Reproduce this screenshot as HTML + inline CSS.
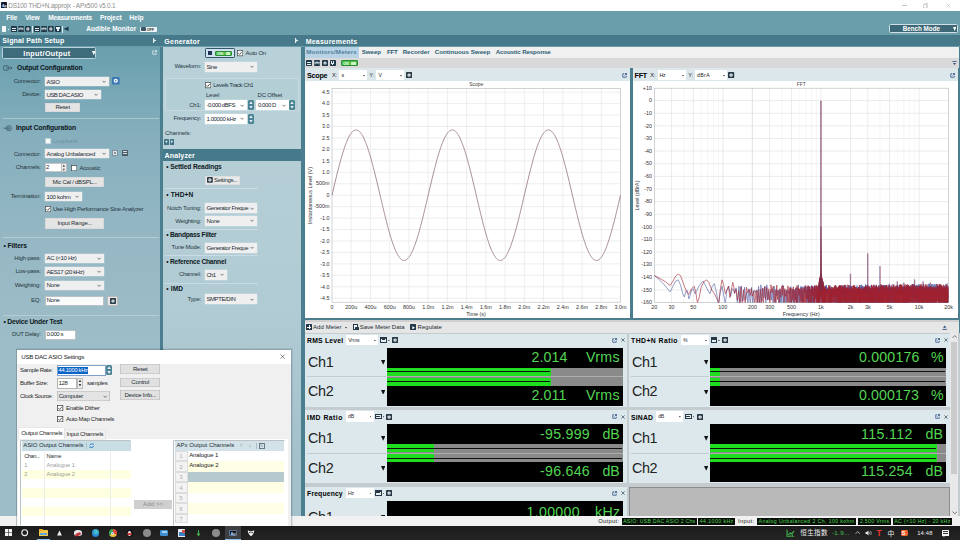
<!DOCTYPE html>
<html><head><meta charset="utf-8"><title>APx500</title><style>
html,body{margin:0;padding:0;}
body{width:960px;height:540px;overflow:hidden;position:relative;background:#6a9eab;font-family:"Liberation Sans", "Noto Sans CJK SC", sans-serif;}
#r{position:absolute;left:0;top:0;width:960px;height:540px;overflow:hidden;}
#r div,#r span,#r svg{position:absolute;}
#r span{display:block;}
</style></head><body><div id="r">
<div style="left:0.00px;top:0.00px;width:960.00px;height:11.30px;background:#ffffff;"></div>
<div style="left:1.20px;top:2.20px;width:5.60px;height:5.80px;background:#151a2a;border-radius:0.6px;"></div>
<span id="t0" style="top:4px;height:5px;line-height:5px;font-size:3.6px;color:#cfe6ff;white-space:nowrap;font-weight:bold;letter-spacing:-0.144px;left:2.00px;">Ap</span>
<span id="t1" style="top:1px;height:9px;line-height:9px;font-size:6.4px;color:#8c8c8c;white-space:nowrap;letter-spacing:-0.143px;left:8.20px;">DS100 THD+N.approjx - APx500 v5.0.1</span>
<div style="left:901.50px;top:5.20px;width:5.00px;height:0.60px;background:#c4c4c4;"></div>
<svg style="left:922.6px;top:2.6px" width="5.6" height="5.6" viewBox="0 0 10 10"><path d="M1,3 H7 V9 H1 Z M3,3 V1 H9 V7 H7" fill="none" stroke="#a8a8a8" stroke-width="0.9"/></svg>
<svg style="left:945.50px;top:3.00px" width="5" height="5" viewBox="0 0 10 10"><path d="M1,1 L9,9 M9,1 L1,9" fill="none" stroke="#b0b0b0" stroke-width="1.0"/></svg>
<div style="left:0.00px;top:11.30px;width:960.00px;height:23.60px;background:#6a9eab;"></div>
<span id="t2" style="top:13px;height:9px;line-height:9px;font-size:6.6px;color:#fff;white-space:nowrap;font-weight:bold;letter-spacing:-0.115px;left:6.30px;">File</span>
<span id="t3" style="top:13px;height:9px;line-height:9px;font-size:6.6px;color:#fff;white-space:nowrap;font-weight:bold;letter-spacing:-0.180px;left:25.20px;">View</span>
<span id="t4" style="top:13px;height:9px;line-height:9px;font-size:6.6px;color:#fff;white-space:nowrap;font-weight:bold;letter-spacing:-0.207px;left:48.30px;">Measurements</span>
<span id="t5" style="top:13px;height:9px;line-height:9px;font-size:6.6px;color:#fff;white-space:nowrap;font-weight:bold;letter-spacing:-0.123px;left:100.00px;">Project</span>
<span id="t6" style="top:13px;height:9px;line-height:9px;font-size:6.6px;color:#fff;white-space:nowrap;font-weight:bold;letter-spacing:-0.024px;left:129.30px;">Help</span>
<div style="left:2.00px;top:25.80px;width:4.20px;height:6.00px;background:#f4f7f8;border-radius:0.5px;"></div>
<div style="left:8.00px;top:28.80px;width:1.20px;height:0.80px;background:#eef;"></div>
<div style="left:11.20px;top:26.00px;width:5.80px;height:5.80px;background:#20394a;border-radius:0.8px;"></div>
<div style="left:12.10px;top:28.00px;width:4.00px;height:0.80px;background:#e6eef2;"></div>
<div style="left:12.10px;top:29.60px;width:4.00px;height:0.80px;background:#e6eef2;"></div>
<div style="left:18.00px;top:26.00px;width:5.80px;height:5.80px;background:#20394a;border-radius:0.8px;"></div>
<svg style="left:18.00px;top:26.00px" width="5.8" height="5.8" viewBox="0 0 10 10"><path d="M1.5,7.5 V3 L3.5,6 L5,2.5 L6.5,6 L8.5,3 V7.5" fill="none" stroke="#e6eef2" stroke-width="1.3"/></svg>
<svg style="left:24.80px;top:26.00px" width="5.8" height="5.8" viewBox="0 0 10 10"><rect x="0" y="0" width="10" height="10" rx="1.2" fill="#20394a"/><circle cx="5" cy="5" r="2.7" fill="#f2f6f8"/><circle cx="5" cy="5" r="1" fill="#20394a"/></svg>
<div style="left:32.00px;top:25.50px;width:0.60px;height:7.00px;background:#dce8ec;"></div>
<div style="left:33.80px;top:26.00px;width:5.80px;height:5.80px;background:#20394a;border-radius:0.8px;"></div>
<div style="left:34.70px;top:28.00px;width:4.00px;height:0.80px;background:#e6eef2;"></div>
<div style="left:34.70px;top:29.60px;width:4.00px;height:0.80px;background:#e6eef2;"></div>
<div style="left:40.80px;top:26.00px;width:5.80px;height:5.80px;background:#20394a;border-radius:0.8px;"></div>
<svg style="left:40.80px;top:26.00px" width="5.8" height="5.8" viewBox="0 0 10 10"><path d="M1.5,7.5 V3 L3.5,6 L5,2.5 L6.5,6 L8.5,3 V7.5" fill="none" stroke="#e6eef2" stroke-width="1.3"/></svg>
<svg style="left:48.00px;top:26.00px" width="5.8" height="5.8" viewBox="0 0 10 10"><rect x="0" y="0" width="10" height="10" rx="1.2" fill="#20394a"/><circle cx="5" cy="5" r="2.7" fill="#f2f6f8"/><circle cx="5" cy="5" r="1" fill="#20394a"/></svg>
<div style="left:55.00px;top:26.00px;width:5.80px;height:5.80px;background:#20394a;border-radius:0.8px;"></div>
<div style="left:56.00px;top:27.00px;width:1.60px;height:1.60px;background:#e6eef2;"></div>
<div style="left:58.20px;top:27.00px;width:1.60px;height:1.60px;background:#e6eef2;"></div>
<div style="left:57.10px;top:29.20px;width:1.60px;height:1.60px;background:#e6eef2;"></div>
<div style="left:56.50px;top:28.60px;width:2.80px;height:0.60px;background:#e6eef2;"></div>
<div style="left:62.30px;top:25.50px;width:0.60px;height:7.00px;background:#dce8ec;"></div>
<svg style="left:64.4px;top:26.3px" width="5.6" height="5.6" viewBox="0 0 10 10"><path d="M1,3.5 H4 L8,0.5 V9.5 L4,6.5 H1 Z" fill="#1d3644"/></svg>
<span id="t7" style="top:24px;height:9px;line-height:9px;font-size:6.4px;color:#fff;white-space:nowrap;font-weight:bold;letter-spacing:0.091px;left:86.30px;">Audible Monitor</span>
<div style="left:140.30px;top:26.60px;width:17.00px;height:5.20px;background:#f2f4f5;border-radius:1px;"></div>
<div style="left:141.00px;top:27.20px;width:4.60px;height:4.00px;background:#39566a;border-radius:0.7px;"></div>
<span id="t8" style="top:28px;height:5px;line-height:5px;font-size:3.8px;color:#333;white-space:nowrap;font-weight:bold;letter-spacing:-0.152px;left:146.80px;">OFF</span>
<div style="left:888.80px;top:23.80px;width:68.80px;height:9.70px;background:#3d6877;border:0.7px solid #cfe0e6;box-sizing:border-box;border-radius:1.5px;"></div>
<span id="t9" style="top:24px;height:9px;line-height:9px;font-size:6.3px;color:#fff;white-space:nowrap;font-weight:bold;letter-spacing:-0.014px;left:902.70px;">Bench Mode</span>
<svg style="left:952.90px;top:26.70px" width="3.4" height="4" viewBox="0 0 10 10" preserveAspectRatio="none"><path d="M0,0 H10 L5,10 Z" fill="#fff"/></svg>
<div style="left:0.00px;top:34.90px;width:960.00px;height:11.60px;background:#467a8a;"></div>
<span id="t10" style="top:36px;height:10px;line-height:10px;font-size:7px;color:#fff;white-space:nowrap;font-weight:bold;letter-spacing:0.164px;left:2.20px;">Signal Path Setup</span>
<span id="t11" style="top:37px;height:10px;line-height:10px;font-size:7px;color:#fff;white-space:nowrap;font-weight:bold;letter-spacing:0.248px;left:164.30px;">Generator</span>
<span id="t12" style="top:37px;height:10px;line-height:10px;font-size:7px;color:#fff;white-space:nowrap;font-weight:bold;letter-spacing:0.231px;left:305.70px;">Measurements</span>
<div style="left:152.50px;top:38.00px;width:0.80px;height:5.00px;background:#e6eff2;"></div>
<svg style="left:154.0px;top:39px" width="2.5" height="3" viewBox="0 0 10 10"><path d="M0,0 L10,5 L0,10 Z" fill="#e6eff2"/></svg>
<div style="left:294.50px;top:38.00px;width:0.80px;height:5.00px;background:#e6eff2;"></div>
<svg style="left:296.0px;top:39px" width="2.5" height="3" viewBox="0 0 10 10"><path d="M0,0 L10,5 L0,10 Z" fill="#e6eff2"/></svg>
<div style="left:0.00px;top:46.50px;width:160.20px;height:480.00px;background:linear-gradient(#699fae 0px,#86afbd 90px,#96b8c4 200px,#9dbdc8 300px,#9dbdc8 480px);"></div>
<div style="left:160.20px;top:46.50px;width:2.60px;height:480.00px;background:#4b7f8f;"></div>
<div style="left:1.80px;top:47.20px;width:94.60px;height:12.00px;background:#3f6c7b;border:0.8px solid #b9d3db;box-sizing:border-box;border-radius:1.5px;"></div>
<span id="t13" style="top:49px;height:10px;line-height:10px;font-size:7.2px;color:#fff;white-space:nowrap;font-weight:bold;letter-spacing:0.341px;left:23.30px;">Input/Output</span>
<svg style="left:91.50px;top:51.10px" width="3.6" height="4.2" viewBox="0 0 10 10" preserveAspectRatio="none"><path d="M0,0 H10 L5,10 Z" fill="#fff"/></svg>
<svg style="left:152.30px;top:50.30px" width="5" height="5" viewBox="0 0 10 10"><path d="M4,1.5 H1.5 V8.5 H8.5 V6" fill="none" stroke="#e8f1f4" stroke-width="1.5"/><path d="M5,5 L9,1 M5.5,1 H9 V4.5" fill="none" stroke="#e8f1f4" stroke-width="1.5"/></svg>
<svg style="left:3px;top:64.8px" width="10" height="6" viewBox="0 0 20 12"><rect x="1" y="1.5" width="10" height="9" rx="3" fill="none" stroke="#3b5663" stroke-width="1.6"/><path d="M6,6 H18 M15,3 L18,6 L15,9" fill="none" stroke="#3b5663" stroke-width="1.6"/></svg>
<span id="t14" style="top:63px;height:9px;line-height:9px;font-size:6.8px;color:#0d171c;white-space:nowrap;font-weight:bold;letter-spacing:-0.161px;left:17.00px;">Output Configuration</span>
<span id="t15" style="top:77px;height:8px;line-height:8px;font-size:6px;color:#27373f;white-space:nowrap;letter-spacing:-0.240px;right:919.40px;">Connector:</span>
<div style="left:45.00px;top:76.90px;width:64.00px;height:9.20px;background:#efefef;box-shadow:0 0 0 0.4px rgba(235,240,242,0.55);"></div>
<span id="t16" style="top:78px;height:8px;line-height:8px;font-size:6px;color:#1c2b33;white-space:nowrap;letter-spacing:-0.336px;left:46.50px;">ASIO</span>
<svg style="left:101.90px;top:80.10px" width="4.20" height="3.20" viewBox="-2.1 -1.6 4.2 3.2"><path d="M-1.6,-0.8 L0,0.8 L1.6,-0.8" fill="none" stroke="#444" stroke-width="0.7"/></svg>
<svg style="left:112.00px;top:77.00px" width="7.6" height="7.6" viewBox="0 0 10 10"><rect x="0" y="0" width="10" height="10" rx="1.2" fill="#3d78b4"/><circle cx="5" cy="5" r="2.7" fill="#fff"/><circle cx="5" cy="5" r="1" fill="#3d78b4"/></svg>
<span id="t17" style="top:90px;height:8px;line-height:8px;font-size:6px;color:#27373f;white-space:nowrap;letter-spacing:-0.240px;right:919.40px;">Device:</span>
<div style="left:45.00px;top:89.90px;width:56.40px;height:9.40px;background:#efefef;box-shadow:0 0 0 0.4px rgba(235,240,242,0.55);"></div>
<span id="t18" style="top:91px;height:8px;line-height:8px;font-size:6px;color:#1c2b33;white-space:nowrap;letter-spacing:-0.488px;left:46.50px;">USB DAC ASIO</span>
<svg style="left:94.30px;top:93.20px" width="4.20" height="3.20" viewBox="-2.1 -1.6 4.2 3.2"><path d="M-1.6,-0.8 L0,0.8 L1.6,-0.8" fill="none" stroke="#444" stroke-width="0.7"/></svg>
<div style="left:45.00px;top:102.80px;width:35.30px;height:9.60px;background:#e4e4e4;box-shadow:inset 0 0 0 0.6px #d2d2d2;"></div>
<span id="t19" style="top:103px;height:8px;line-height:8px;font-size:6px;color:#1c2b33;white-space:nowrap;letter-spacing:-0.240px;left:-87.35px;width:300px;text-align:center;">Reset</span>
<div style="left:2.50px;top:118.20px;width:156.00px;height:0.70px;background:#a9c6d0;"></div>
<svg style="left:2.6px;top:124.6px" width="10" height="6.4" viewBox="0 0 20 12.8"><circle cx="12" cy="6.4" r="5" fill="none" stroke="#3b5663" stroke-width="1.6"/><path d="M1,6.4 H13 M10,3.4 L13,6.4 L10,9.4" fill="none" stroke="#3b5663" stroke-width="1.6"/></svg>
<span id="t20" style="top:123px;height:9px;line-height:9px;font-size:6.8px;color:#0d171c;white-space:nowrap;font-weight:bold;letter-spacing:-0.160px;left:16.00px;">Input Configuration</span>
<svg style="left:44.70px;top:138.40px" width="6.2" height="6.2" viewBox="0 0 6.2 6.2"><rect x="0.35" y="0.35" width="5.50" height="5.50" fill="#f4f8f9" stroke="#b5c9d1" stroke-width="0.7"/></svg>
<span id="t21" style="top:137px;height:8px;line-height:8px;font-size:6px;color:#6f93a1;white-space:nowrap;letter-spacing:-0.129px;left:53.00px;">Loopback</span>
<span id="t22" style="top:150px;height:8px;line-height:8px;font-size:6px;color:#27373f;white-space:nowrap;letter-spacing:-0.240px;right:919.40px;">Connector:</span>
<div style="left:45.00px;top:149.00px;width:64.00px;height:9.40px;background:#efefef;box-shadow:0 0 0 0.4px rgba(235,240,242,0.55);"></div>
<span id="t23" style="top:150px;height:8px;line-height:8px;font-size:6px;color:#1c2b33;white-space:nowrap;letter-spacing:-0.228px;left:46.50px;">Analog Unbalanced</span>
<svg style="left:101.90px;top:152.30px" width="4.20" height="3.20" viewBox="-2.1 -1.6 4.2 3.2"><path d="M-1.6,-0.8 L0,0.8 L1.6,-0.8" fill="none" stroke="#444" stroke-width="0.7"/></svg>
<div style="left:112.00px;top:150.20px;width:5.60px;height:5.60px;background:#dfe7ea;border:0.5px solid #7b8f99;box-sizing:border-box;border-radius:0.8px;"></div>
<div style="left:113.90px;top:152.10px;width:1.80px;height:1.80px;border:0.5px solid #556;box-sizing:border-box;border-radius:50%;"></div>
<div style="left:122.00px;top:150.20px;width:6.00px;height:5.60px;background:#4a5d68;border-radius:0.6px;"></div>
<div style="left:123.00px;top:151.30px;width:4.00px;height:1.20px;background:#d5dfe4;"></div>
<div style="left:123.00px;top:153.30px;width:4.00px;height:1.20px;background:#d5dfe4;"></div>
<span id="t24" style="top:163px;height:8px;line-height:8px;font-size:6px;color:#27373f;white-space:nowrap;letter-spacing:-0.240px;right:919.40px;">Channels:</span>
<div style="left:45.00px;top:162.90px;width:16.50px;height:9.30px;background:#fff;border:0.5px solid #c4c8ca;box-sizing:border-box;"></div>
<span id="t25" style="top:163px;height:8px;line-height:8px;font-size:6px;color:#1c2b33;white-space:nowrap;letter-spacing:-0.240px;left:46.00px;">2</span>
<div style="left:61.30px;top:162.90px;width:5.60px;height:9.30px;background:#f0f0f0;border:0.5px solid #bbb;box-sizing:border-box;"></div>
<svg style="left:61.30px;top:162.90px" width="5.6" height="9.3" viewBox="0 0 5.6 9.3"><path d="M2.8,1.6 L3.9999999999999996,3.6500000000000004 L1.6,3.6500000000000004 Z M2.8,7.700000000000001 L3.9999999999999996,5.65 L1.6,5.65 Z" fill="#444"/></svg>
<svg style="left:71.00px;top:164.60px" width="6.2" height="6.2" viewBox="0 0 6.2 6.2"><rect x="0.35" y="0.35" width="5.50" height="5.50" fill="#fff" stroke="#444" stroke-width="0.7"/></svg>
<span id="t26" style="top:164px;height:8px;line-height:8px;font-size:6px;color:#27373f;white-space:nowrap;letter-spacing:-0.248px;left:79.60px;">Acoustic</span>
<div style="left:45.00px;top:177.00px;width:59.20px;height:10.00px;background:#e4e4e4;box-shadow:inset 0 0 0 0.6px #d2d2d2;"></div>
<span id="t27" style="top:178px;height:8px;line-height:8px;font-size:6px;color:#1c2b33;white-space:nowrap;letter-spacing:-0.240px;left:-75.40px;width:300px;text-align:center;">Mic Cal / dBSPL...</span>
<span id="t28" style="top:192px;height:8px;line-height:8px;font-size:6px;color:#27373f;white-space:nowrap;letter-spacing:-0.240px;right:919.40px;">Termination:</span>
<div style="left:45.00px;top:191.80px;width:36.60px;height:9.60px;background:#efefef;box-shadow:0 0 0 0.4px rgba(235,240,242,0.55);"></div>
<span id="t29" style="top:193px;height:8px;line-height:8px;font-size:6px;color:#1c2b33;white-space:nowrap;letter-spacing:-0.295px;left:46.50px;">100 kohm</span>
<svg style="left:74.50px;top:195.20px" width="4.20" height="3.20" viewBox="-2.1 -1.6 4.2 3.2"><path d="M-1.6,-0.8 L0,0.8 L1.6,-0.8" fill="none" stroke="#444" stroke-width="0.7"/></svg>
<svg style="left:44.70px;top:206.20px" width="6.2" height="6.2" viewBox="0 0 6.2 6.2"><rect x="0.35" y="0.35" width="5.50" height="5.50" fill="#fff" stroke="#444" stroke-width="0.7"/><path d="M1.43,3.22 L2.67,4.46 L4.90,1.80" fill="none" stroke="#222" stroke-width="0.75"/></svg>
<span id="t30" style="top:205px;height:8px;line-height:8px;font-size:6px;color:#27373f;white-space:nowrap;letter-spacing:-0.257px;left:53.00px;">Use High Performance Sine Analyzer</span>
<div style="left:45.00px;top:217.60px;width:59.20px;height:11.60px;background:#e4e4e4;box-shadow:inset 0 0 0 0.6px #d2d2d2;"></div>
<span id="t31" style="top:219px;height:8px;line-height:8px;font-size:6px;color:#1c2b33;white-space:nowrap;letter-spacing:-0.240px;left:-75.40px;width:300px;text-align:center;">Input Range...</span>
<div style="left:2.50px;top:237.20px;width:156.00px;height:0.70px;background:#b3ccd5;"></div>
<span id="t32" style="top:241px;height:9px;line-height:9px;font-size:6.8px;color:#0d171c;white-space:nowrap;font-weight:bold;letter-spacing:-0.141px;left:3.60px;">• Filters</span>
<span id="t33" style="top:254px;height:8px;line-height:8px;font-size:6px;color:#27373f;white-space:nowrap;letter-spacing:-0.240px;right:919.40px;">High-pass:</span>
<div style="left:45.00px;top:253.60px;width:59.00px;height:9.40px;background:#efefef;box-shadow:0 0 0 0.4px rgba(235,240,242,0.55);"></div>
<span id="t34" style="top:254px;height:8px;line-height:8px;font-size:6px;color:#1c2b33;white-space:nowrap;letter-spacing:-0.290px;left:46.50px;">AC (&lt;10 Hz)</span>
<svg style="left:96.90px;top:256.90px" width="4.20" height="3.20" viewBox="-2.1 -1.6 4.2 3.2"><path d="M-1.6,-0.8 L0,0.8 L1.6,-0.8" fill="none" stroke="#444" stroke-width="0.7"/></svg>
<span id="t35" style="top:267px;height:8px;line-height:8px;font-size:6px;color:#27373f;white-space:nowrap;letter-spacing:-0.240px;right:919.40px;">Low-pass:</span>
<div style="left:45.00px;top:267.00px;width:59.00px;height:9.40px;background:#efefef;box-shadow:0 0 0 0.4px rgba(235,240,242,0.55);"></div>
<span id="t36" style="top:268px;height:8px;line-height:8px;font-size:6px;color:#1c2b33;white-space:nowrap;letter-spacing:-0.395px;left:46.50px;">AES17 (20 kHz)</span>
<svg style="left:96.90px;top:270.30px" width="4.20" height="3.20" viewBox="-2.1 -1.6 4.2 3.2"><path d="M-1.6,-0.8 L0,0.8 L1.6,-0.8" fill="none" stroke="#444" stroke-width="0.7"/></svg>
<span id="t37" style="top:281px;height:8px;line-height:8px;font-size:6px;color:#27373f;white-space:nowrap;letter-spacing:-0.240px;right:919.40px;">Weighting:</span>
<div style="left:45.00px;top:280.60px;width:59.00px;height:9.40px;background:#efefef;box-shadow:0 0 0 0.4px rgba(235,240,242,0.55);"></div>
<span id="t38" style="top:281px;height:8px;line-height:8px;font-size:6px;color:#1c2b33;white-space:nowrap;letter-spacing:-0.336px;left:46.50px;">None</span>
<svg style="left:96.90px;top:283.90px" width="4.20" height="3.20" viewBox="-2.1 -1.6 4.2 3.2"><path d="M-1.6,-0.8 L0,0.8 L1.6,-0.8" fill="none" stroke="#444" stroke-width="0.7"/></svg>
<span id="t39" style="top:296px;height:8px;line-height:8px;font-size:6px;color:#27373f;white-space:nowrap;letter-spacing:-0.240px;right:919.40px;">EQ:</span>
<div style="left:45.00px;top:296.00px;width:59.00px;height:9.60px;background:#fafafa;border:0.5px solid #b9c2c6;box-sizing:border-box;"></div>
<span id="t40" style="top:296px;height:8px;line-height:8px;font-size:6px;color:#1c2b33;white-space:nowrap;letter-spacing:-0.336px;left:46.50px;">None</span>
<div style="left:107.00px;top:296.00px;width:11.40px;height:10.00px;background:#e6e6e6;border:0.5px solid #bbb;box-sizing:border-box;"></div>
<svg style="left:109.80px;top:298.00px" width="6" height="6" viewBox="0 0 10 10"><rect x="0" y="0" width="10" height="10" rx="1.2" fill="#2a3d49"/><circle cx="5" cy="5" r="2.7" fill="#fff"/><circle cx="5" cy="5" r="1" fill="#2a3d49"/></svg>
<div style="left:2.50px;top:314.70px;width:156.00px;height:0.70px;background:#b3ccd5;"></div>
<span id="t41" style="top:317px;height:9px;line-height:9px;font-size:6.8px;color:#0d171c;white-space:nowrap;font-weight:bold;letter-spacing:-0.246px;left:3.60px;">• Device Under Test</span>
<span id="t42" style="top:330px;height:8px;line-height:8px;font-size:6px;color:#27373f;white-space:nowrap;letter-spacing:-0.240px;right:919.40px;">DUT Delay:</span>
<div style="left:45.00px;top:330.00px;width:31.20px;height:9.60px;background:#fff;border:0.5px solid #b9c2c6;box-sizing:border-box;"></div>
<span id="t43" style="top:330px;height:8px;line-height:8px;font-size:6px;color:#1c2b33;white-space:nowrap;letter-spacing:-0.455px;left:46.50px;">0.000 s</span>
<div style="left:162.80px;top:46.50px;width:138.00px;height:102.00px;background:#b8d1d9;"></div>
<div style="left:300.60px;top:46.50px;width:4.00px;height:480.00px;background:#4b7f8f;"></div>
<div style="left:205.30px;top:48.20px;width:29.60px;height:10.20px;background:#cfe3ef;border:0.7px solid #35566a;box-sizing:border-box;border-radius:1.2px;"></div>
<div style="left:207.60px;top:51.00px;width:4.20px;height:4.40px;background:#1f3454;"></div>
<div style="left:214.80px;top:50.60px;width:17.60px;height:5.40px;background:#4fc24a;border:0.5px solid #2e8a34;box-sizing:border-box;border-radius:1px;"></div>
<span id="t44" style="top:51px;height:6px;line-height:6px;font-size:4px;color:#eaffea;white-space:nowrap;font-weight:bold;letter-spacing:-0.160px;left:217.30px;">ON</span>
<div style="left:225.80px;top:51.80px;width:4.60px;height:3.00px;background:#c9f5c4;border-radius:0.6px;"></div>
<svg style="left:236.80px;top:50.40px" width="6.2" height="6.2" viewBox="0 0 6.2 6.2"><rect x="0.35" y="0.35" width="5.50" height="5.50" fill="#fff" stroke="#444" stroke-width="0.7"/><path d="M1.43,3.22 L2.67,4.46 L4.90,1.80" fill="none" stroke="#222" stroke-width="0.75"/></svg>
<span id="t45" style="top:49px;height:8px;line-height:8px;font-size:6px;color:#27373f;white-space:nowrap;letter-spacing:-0.217px;left:245.50px;">Auto On</span>
<span id="t46" style="top:62px;height:8px;line-height:8px;font-size:6px;color:#27373f;white-space:nowrap;letter-spacing:-0.240px;right:759.00px;">Waveform:</span>
<div style="left:204.90px;top:62.00px;width:52.40px;height:9.70px;background:#efefef;box-shadow:0 0 0 0.4px rgba(235,240,242,0.55);"></div>
<span id="t47" style="top:63px;height:8px;line-height:8px;font-size:6px;color:#1c2b33;white-space:nowrap;letter-spacing:-0.354px;left:206.40px;">Sine</span>
<svg style="left:250.20px;top:65.45px" width="4.20" height="3.20" viewBox="-2.1 -1.6 4.2 3.2"><path d="M-1.6,-0.8 L0,0.8 L1.6,-0.8" fill="none" stroke="#444" stroke-width="0.7"/></svg>
<div style="left:164.60px;top:78.30px;width:134.00px;height:33.20px;background:#b4ced6;border:0.6px solid #c6dae0;box-sizing:border-box;"></div>
<svg style="left:204.90px;top:82.40px" width="6.2" height="6.2" viewBox="0 0 6.2 6.2"><rect x="0.35" y="0.35" width="5.50" height="5.50" fill="#fff" stroke="#444" stroke-width="0.7"/><path d="M1.43,3.22 L2.67,4.46 L4.90,1.80" fill="none" stroke="#222" stroke-width="0.75"/></svg>
<span id="t48" style="top:81px;height:8px;line-height:8px;font-size:6px;color:#27373f;white-space:nowrap;letter-spacing:-0.391px;left:213.20px;">Levels Track Ch1</span>
<span id="t49" style="top:91px;height:8px;line-height:8px;font-size:6px;color:#27373f;white-space:nowrap;letter-spacing:-0.269px;left:206.00px;">Level</span>
<span id="t50" style="top:91px;height:8px;line-height:8px;font-size:6px;color:#27373f;white-space:nowrap;letter-spacing:-0.204px;left:257.60px;">DC Offset</span>
<span id="t51" style="top:101px;height:8px;line-height:8px;font-size:6px;color:#27373f;white-space:nowrap;letter-spacing:-0.240px;right:759.00px;">Ch1:</span>
<div style="left:204.90px;top:100.10px;width:42.20px;height:10.00px;background:#fff;box-shadow:0 0 0 0.4px rgba(235,240,242,0.55);"></div>
<span id="t52" style="top:101px;height:8px;line-height:8px;font-size:6px;color:#1c2b33;white-space:nowrap;letter-spacing:-0.463px;left:206.40px;">-0.000 dBFS</span>
<svg style="left:240.00px;top:103.70px" width="4.20" height="3.20" viewBox="-2.1 -1.6 4.2 3.2"><path d="M-1.6,-0.8 L0,0.8 L1.6,-0.8" fill="none" stroke="#444" stroke-width="0.7"/></svg>
<div style="left:247.60px;top:100.30px;width:6.00px;height:9.80px;background:#4a8393;border-radius:1.5px;"></div>
<svg style="left:247.60px;top:100.30px" width="6" height="9.8" viewBox="0 0 6 9.8"><path d="M3.0,1.2 L4.7,3.9000000000000004 L1.3,3.9000000000000004 Z M3.0,8.600000000000001 L4.7,5.9 L1.3,5.9 Z" fill="#e8f2f5"/></svg>
<div style="left:256.40px;top:100.10px;width:32.20px;height:10.00px;background:#fff;box-shadow:0 0 0 0.4px rgba(235,240,242,0.55);"></div>
<span id="t53" style="top:101px;height:8px;line-height:8px;font-size:6px;color:#1c2b33;white-space:nowrap;letter-spacing:-0.417px;left:257.90px;">0.000 D</span>
<svg style="left:281.50px;top:103.70px" width="4.20" height="3.20" viewBox="-2.1 -1.6 4.2 3.2"><path d="M-1.6,-0.8 L0,0.8 L1.6,-0.8" fill="none" stroke="#444" stroke-width="0.7"/></svg>
<div style="left:289.20px;top:100.30px;width:6.00px;height:9.80px;background:#4a8393;border-radius:1.5px;"></div>
<svg style="left:289.20px;top:100.30px" width="6" height="9.8" viewBox="0 0 6 9.8"><path d="M3.0,1.2 L4.7,3.9000000000000004 L1.3,3.9000000000000004 Z M3.0,8.600000000000001 L4.7,5.9 L1.3,5.9 Z" fill="#e8f2f5"/></svg>
<span id="t54" style="top:114px;height:8px;line-height:8px;font-size:6px;color:#27373f;white-space:nowrap;letter-spacing:-0.240px;right:759.00px;">Frequency:</span>
<div style="left:204.90px;top:113.80px;width:42.20px;height:10.00px;background:#fff;box-shadow:0 0 0 0.4px rgba(235,240,242,0.55);"></div>
<span id="t55" style="top:115px;height:8px;line-height:8px;font-size:6px;color:#1c2b33;white-space:nowrap;letter-spacing:-0.373px;left:206.40px;">1.00000 kHz</span>
<svg style="left:240.00px;top:117.40px" width="4.20" height="3.20" viewBox="-2.1 -1.6 4.2 3.2"><path d="M-1.6,-0.8 L0,0.8 L1.6,-0.8" fill="none" stroke="#444" stroke-width="0.7"/></svg>
<div style="left:247.60px;top:114.00px;width:6.00px;height:9.80px;background:#4a8393;border-radius:1.5px;"></div>
<svg style="left:247.60px;top:114.00px" width="6" height="9.8" viewBox="0 0 6 9.8"><path d="M3.0,1.2 L4.7,3.9000000000000004 L1.3,3.9000000000000004 Z M3.0,8.600000000000001 L4.7,5.9 L1.3,5.9 Z" fill="#e8f2f5"/></svg>
<span id="t56" style="top:129px;height:8px;line-height:8px;font-size:6px;color:#27373f;white-space:nowrap;letter-spacing:-0.115px;left:165.00px;">Channels:</span>
<div style="left:164.20px;top:139.20px;width:4.80px;height:5.60px;background:#3f7283;border-radius:0.6px;"></div>
<div style="left:169.60px;top:139.20px;width:4.80px;height:5.60px;background:#3f7283;border-radius:0.6px;"></div>
<svg style="left:164.2px;top:139.2px" width="10.2" height="5.6" viewBox="0 0 10.2 5.6"><path d="M1.2,1.8 H3.6 L2.4,4.2 Z M6.6,1.8 H9 L7.8,4.2 Z" fill="#e8f2f5"/></svg>
<div style="left:162.80px;top:148.50px;width:138.00px;height:13.00px;background:#467a8a;"></div>
<span id="t57" style="top:151px;height:10px;line-height:10px;font-size:7px;color:#fff;white-space:nowrap;font-weight:bold;letter-spacing:0.164px;left:164.50px;">Analyzer</span>
<div style="left:162.80px;top:161.30px;width:138.00px;height:365.00px;background:linear-gradient(#b5ced6 0px,#b1cbd4 150px,#a3c1cb 300px,#a3c1cb 365px);"></div>
<span id="t58" style="top:162px;height:9px;line-height:9px;font-size:6.6px;color:#0d171c;white-space:nowrap;font-weight:bold;letter-spacing:-0.130px;left:166.30px;">• Settled Readings</span>
<div style="left:205.30px;top:175.70px;width:34.90px;height:9.20px;background:#e9e9e9;box-shadow:inset 0 0 0 0.5px #d6d6d6;"></div>
<svg style="left:207.00px;top:177.30px" width="5.8" height="5.8" viewBox="0 0 10 10"><rect x="0" y="0" width="10" height="10" rx="1.2" fill="#263a47"/><circle cx="5" cy="5" r="2.7" fill="#fff"/><circle cx="5" cy="5" r="1" fill="#263a47"/></svg>
<span id="t59" style="top:176px;height:8px;line-height:8px;font-size:6px;color:#1c2b33;white-space:nowrap;letter-spacing:-0.308px;left:214.00px;">Settings...</span>
<div style="left:164.80px;top:188.40px;width:93.00px;height:0.60px;background:#c9dce2;"></div>
<span id="t60" style="top:190px;height:9px;line-height:9px;font-size:6.6px;color:#0d171c;white-space:nowrap;font-weight:bold;letter-spacing:0.127px;left:166.30px;">• THD+N</span>
<span id="t61" style="top:204px;height:8px;line-height:8px;font-size:6px;color:#27373f;white-space:nowrap;letter-spacing:-0.240px;right:759.00px;">Notch Tuning:</span>
<div style="left:204.90px;top:203.20px;width:52.40px;height:9.70px;background:#efefef;box-shadow:0 0 0 0.4px rgba(235,240,242,0.55);"></div>
<span id="t62" style="top:204px;height:8px;line-height:8px;font-size:6px;color:#1c2b33;white-space:nowrap;letter-spacing:-0.363px;left:206.40px;">Generator Freque</span>
<svg style="left:250.20px;top:206.65px" width="4.20" height="3.20" viewBox="-2.1 -1.6 4.2 3.2"><path d="M-1.6,-0.8 L0,0.8 L1.6,-0.8" fill="none" stroke="#444" stroke-width="0.7"/></svg>
<span id="t63" style="top:217px;height:8px;line-height:8px;font-size:6px;color:#27373f;white-space:nowrap;letter-spacing:-0.240px;right:759.00px;">Weighting:</span>
<div style="left:204.90px;top:216.00px;width:52.40px;height:9.70px;background:#efefef;box-shadow:0 0 0 0.4px rgba(235,240,242,0.55);"></div>
<span id="t64" style="top:217px;height:8px;line-height:8px;font-size:6px;color:#1c2b33;white-space:nowrap;letter-spacing:-0.311px;left:206.40px;">None</span>
<svg style="left:250.20px;top:219.45px" width="4.20" height="3.20" viewBox="-2.1 -1.6 4.2 3.2"><path d="M-1.6,-0.8 L0,0.8 L1.6,-0.8" fill="none" stroke="#444" stroke-width="0.7"/></svg>
<div style="left:164.80px;top:228.50px;width:93.00px;height:0.60px;background:#c9dce2;"></div>
<span id="t65" style="top:230px;height:9px;line-height:9px;font-size:6.6px;color:#0d171c;white-space:nowrap;font-weight:bold;letter-spacing:-0.201px;left:166.30px;">• Bandpass Filter</span>
<span id="t66" style="top:243px;height:8px;line-height:8px;font-size:6px;color:#27373f;white-space:nowrap;letter-spacing:-0.240px;right:759.00px;">Tune Mode:</span>
<div style="left:204.90px;top:243.00px;width:52.40px;height:9.70px;background:#efefef;box-shadow:0 0 0 0.4px rgba(235,240,242,0.55);"></div>
<span id="t67" style="top:244px;height:8px;line-height:8px;font-size:6px;color:#1c2b33;white-space:nowrap;letter-spacing:-0.363px;left:206.40px;">Generator Freque</span>
<svg style="left:250.20px;top:246.45px" width="4.20" height="3.20" viewBox="-2.1 -1.6 4.2 3.2"><path d="M-1.6,-0.8 L0,0.8 L1.6,-0.8" fill="none" stroke="#444" stroke-width="0.7"/></svg>
<div style="left:164.80px;top:255.30px;width:93.00px;height:0.60px;background:#c9dce2;"></div>
<span id="t68" style="top:257px;height:9px;line-height:9px;font-size:6.6px;color:#0d171c;white-space:nowrap;font-weight:bold;letter-spacing:-0.220px;left:166.30px;">• Reference Channel</span>
<span id="t69" style="top:270px;height:8px;line-height:8px;font-size:6px;color:#27373f;white-space:nowrap;letter-spacing:-0.240px;right:759.00px;">Channel:</span>
<div style="left:204.90px;top:270.00px;width:22.00px;height:9.70px;background:#efefef;box-shadow:0 0 0 0.4px rgba(235,240,242,0.55);"></div>
<span id="t70" style="top:271px;height:8px;line-height:8px;font-size:6px;color:#1c2b33;white-space:nowrap;letter-spacing:-0.639px;left:206.40px;">Ch1</span>
<svg style="left:219.80px;top:273.45px" width="4.20" height="3.20" viewBox="-2.1 -1.6 4.2 3.2"><path d="M-1.6,-0.8 L0,0.8 L1.6,-0.8" fill="none" stroke="#444" stroke-width="0.7"/></svg>
<div style="left:164.80px;top:282.60px;width:93.00px;height:0.60px;background:#c9dce2;"></div>
<span id="t71" style="top:284px;height:9px;line-height:9px;font-size:6.6px;color:#0d171c;white-space:nowrap;font-weight:bold;letter-spacing:0.153px;left:166.30px;">• IMD</span>
<span id="t72" style="top:295px;height:8px;line-height:8px;font-size:6px;color:#27373f;white-space:nowrap;letter-spacing:-0.240px;right:759.00px;">Type:</span>
<div style="left:204.90px;top:294.20px;width:52.40px;height:9.70px;background:#efefef;box-shadow:0 0 0 0.4px rgba(235,240,242,0.55);"></div>
<span id="t73" style="top:295px;height:8px;line-height:8px;font-size:6px;color:#1c2b33;white-space:nowrap;letter-spacing:-0.397px;left:206.40px;">SMPTE/DIN</span>
<svg style="left:250.20px;top:297.65px" width="4.20" height="3.20" viewBox="-2.1 -1.6 4.2 3.2"><path d="M-1.6,-0.8 L0,0.8 L1.6,-0.8" fill="none" stroke="#444" stroke-width="0.7"/></svg>
<div style="left:304.50px;top:46.50px;width:655.50px;height:11.60px;background:#f0f0f0;"></div>
<div style="left:304.50px;top:47.00px;width:54.00px;height:10.80px;background:#b9d3e6;"></div>
<span id="t74" style="top:47px;height:9px;line-height:9px;font-size:6.2px;color:#4f7f97;white-space:nowrap;font-weight:bold;letter-spacing:0.200px;left:306.20px;">Monitors/Meters</span>
<span id="t75" style="top:47px;height:9px;line-height:9px;font-size:6.2px;color:#2c5f73;white-space:nowrap;font-weight:bold;letter-spacing:-0.082px;left:361.80px;">Sweep</span>
<span id="t76" style="top:47px;height:9px;line-height:9px;font-size:6.2px;color:#2c5f73;white-space:nowrap;font-weight:bold;letter-spacing:-0.281px;left:387.00px;">FFT</span>
<span id="t77" style="top:47px;height:9px;line-height:9px;font-size:6.2px;color:#2c5f73;white-space:nowrap;font-weight:bold;letter-spacing:-0.034px;left:402.70px;">Recorder</span>
<span id="t78" style="top:47px;height:9px;line-height:9px;font-size:6.2px;color:#2c5f73;white-space:nowrap;font-weight:bold;letter-spacing:-0.012px;left:434.80px;">Continuous Sweep</span>
<span id="t79" style="top:47px;height:9px;line-height:9px;font-size:6.2px;color:#2c5f73;white-space:nowrap;font-weight:bold;letter-spacing:-0.148px;left:495.70px;">Acoustic Response</span>
<div style="left:304.50px;top:58.10px;width:655.50px;height:10.00px;background:#d9d9d9;"></div>
<div style="left:306.00px;top:60.00px;width:6.00px;height:6.00px;background:#20394a;border-radius:0.8px;"></div>
<div style="left:306.90px;top:62.00px;width:4.20px;height:0.80px;background:#e6eef2;"></div>
<div style="left:306.90px;top:63.60px;width:4.20px;height:0.80px;background:#e6eef2;"></div>
<div style="left:313.50px;top:60.00px;width:6.00px;height:6.00px;background:#20394a;border-radius:0.8px;"></div>
<svg style="left:313.50px;top:60.00px" width="6" height="6" viewBox="0 0 10 10"><path d="M1.5,7.5 V3 L3.5,6 L5,2.5 L6.5,6 L8.5,3 V7.5" fill="none" stroke="#e6eef2" stroke-width="1.3"/></svg>
<svg style="left:321.50px;top:60.00px" width="6" height="6" viewBox="0 0 10 10"><rect x="0" y="0" width="10" height="10" rx="1.2" fill="#20394a"/><circle cx="5" cy="5" r="2.7" fill="#f2f6f8"/><circle cx="5" cy="5" r="1" fill="#20394a"/></svg>
<div style="left:329.50px;top:60.00px;width:6.00px;height:6.00px;background:#20394a;border-radius:0.8px;"></div>
<div style="left:330.50px;top:61.00px;width:1.60px;height:1.60px;background:#e6eef2;"></div>
<div style="left:332.90px;top:61.00px;width:1.60px;height:1.60px;background:#e6eef2;"></div>
<div style="left:331.70px;top:63.40px;width:1.60px;height:1.60px;background:#e6eef2;"></div>
<div style="left:331.00px;top:62.70px;width:3.00px;height:0.60px;background:#e6eef2;"></div>
<div style="left:341.00px;top:60.30px;width:16.60px;height:5.40px;background:#4fc24a;border:0.5px solid #2e8a34;box-sizing:border-box;border-radius:1px;"></div>
<span id="t80" style="top:62px;height:5px;line-height:5px;font-size:3.8px;color:#eaffea;white-space:nowrap;font-weight:bold;letter-spacing:-0.152px;left:343.20px;">ON</span>
<div style="left:351.20px;top:61.50px;width:4.60px;height:3.00px;background:#c9f5c4;border-radius:0.6px;"></div>
<svg style="left:951.5px;top:60.5px" width="5" height="5" viewBox="0 0 10 10"><path d="M1,1 H9" stroke="#2b4d7b" stroke-width="1.6"/><path d="M2,4 H8 L5,8 Z" fill="#2b4d7b"/></svg>
<div style="left:304.50px;top:68.10px;width:655.50px;height:252.00px;background:#4b7f8f;"></div>
<div style="left:304.70px;top:68.40px;width:324.90px;height:12.20px;background:#dbe7eb;"></div>
<div style="left:304.70px;top:80.60px;width:324.90px;height:237.60px;background:#fff;"></div>
<div style="left:632.60px;top:68.40px;width:325.80px;height:12.20px;background:#dbe7eb;"></div>
<div style="left:632.60px;top:80.60px;width:325.80px;height:237.60px;background:#fff;"></div>
<span id="t81" style="top:71px;height:10px;line-height:10px;font-size:7.2px;color:#000;white-space:nowrap;font-weight:bold;letter-spacing:-0.256px;left:307.00px;">Scope</span>
<span id="t82" style="top:71px;height:8px;line-height:8px;font-size:5.6px;color:#222;white-space:nowrap;letter-spacing:-0.224px;left:332.00px;">X:</span>
<div style="left:339.00px;top:69.60px;width:28.00px;height:10.20px;background:#fff;"></div>
<span id="t83" style="top:72px;height:7px;line-height:7px;font-size:5.2px;color:#222;white-space:nowrap;letter-spacing:-0.208px;left:341.50px;">s</span>
<svg style="left:363.30px;top:75.00px" width="2" height="1.6" viewBox="0 0 10 10" preserveAspectRatio="none"><path d="M0,0 H10 L5,10 Z" fill="#333"/></svg>
<span id="t84" style="top:71px;height:8px;line-height:8px;font-size:5.6px;color:#222;white-space:nowrap;letter-spacing:-0.224px;left:369.30px;">Y:</span>
<div style="left:376.00px;top:69.60px;width:28.00px;height:10.20px;background:#fff;"></div>
<span id="t85" style="top:72px;height:7px;line-height:7px;font-size:5.2px;color:#222;white-space:nowrap;letter-spacing:-0.208px;left:378.50px;">V</span>
<svg style="left:400.30px;top:75.00px" width="2" height="1.6" viewBox="0 0 10 10" preserveAspectRatio="none"><path d="M0,0 H10 L5,10 Z" fill="#333"/></svg>
<svg style="left:406.20px;top:72.00px" width="6.2" height="6.2" viewBox="0 0 10 10"><rect x="0" y="0" width="10" height="10" rx="1.2" fill="#263a47"/><circle cx="5" cy="5" r="2.7" fill="#fff"/><circle cx="5" cy="5" r="1" fill="#263a47"/></svg>
<svg style="left:622.00px;top:72.80px" width="5" height="5" viewBox="0 0 10 10"><path d="M4,1.5 H1.5 V8.5 H8.5 V6" fill="none" stroke="#2a4d85" stroke-width="1.5"/><path d="M5,5 L9,1 M5.5,1 H9 V4.5" fill="none" stroke="#2a4d85" stroke-width="1.5"/></svg>
<span id="t86" style="top:71px;height:10px;line-height:10px;font-size:7.2px;color:#000;white-space:nowrap;font-weight:bold;letter-spacing:-0.257px;left:634.60px;">FFT</span>
<span id="t87" style="top:71px;height:8px;line-height:8px;font-size:5.6px;color:#222;white-space:nowrap;letter-spacing:-0.224px;left:650.30px;">X:</span>
<div style="left:657.60px;top:69.60px;width:28.60px;height:10.20px;background:#fff;"></div>
<span id="t88" style="top:72px;height:7px;line-height:7px;font-size:5.2px;color:#222;white-space:nowrap;letter-spacing:-0.208px;left:659.50px;">Hz</span>
<svg style="left:682.20px;top:75.00px" width="2" height="1.6" viewBox="0 0 10 10" preserveAspectRatio="none"><path d="M0,0 H10 L5,10 Z" fill="#333"/></svg>
<span id="t89" style="top:71px;height:8px;line-height:8px;font-size:5.6px;color:#222;white-space:nowrap;letter-spacing:-0.224px;left:688.20px;">Y:</span>
<div style="left:695.00px;top:69.60px;width:31.60px;height:10.20px;background:#fff;"></div>
<span id="t90" style="top:72px;height:7px;line-height:7px;font-size:5.2px;color:#222;white-space:nowrap;letter-spacing:0.363px;left:697.00px;">dBrA</span>
<svg style="left:723.00px;top:75.00px" width="2" height="1.6" viewBox="0 0 10 10" preserveAspectRatio="none"><path d="M0,0 H10 L5,10 Z" fill="#333"/></svg>
<svg style="left:728.40px;top:72.00px" width="6.2" height="6.2" viewBox="0 0 10 10"><rect x="0" y="0" width="10" height="10" rx="1.2" fill="#263a47"/><circle cx="5" cy="5" r="2.7" fill="#fff"/><circle cx="5" cy="5" r="1" fill="#263a47"/></svg>
<svg style="left:950.30px;top:72.80px" width="5" height="5" viewBox="0 0 10 10"><path d="M4,1.5 H1.5 V8.5 H8.5 V6" fill="none" stroke="#2a4d85" stroke-width="1.5"/><path d="M5,5 L9,1 M5.5,1 H9 V4.5" fill="none" stroke="#2a4d85" stroke-width="1.5"/></svg>
<svg style="left:0;top:0" width="960" height="540" viewBox="0 0 960 540" font-family='Liberation Sans, Noto Sans CJK SC, sans-serif'><path d="M351.23,88.4 V302.2 M370.47,88.4 V302.2 M389.70,88.4 V302.2 M408.93,88.4 V302.2 M428.17,88.4 V302.2 M447.40,88.4 V302.2 M466.63,88.4 V302.2 M485.87,88.4 V302.2 M505.10,88.4 V302.2 M524.33,88.4 V302.2 M543.57,88.4 V302.2 M562.80,88.4 V302.2 M582.03,88.4 V302.2 M601.27,88.4 V302.2 M332.0,298.25 H620.5 M332.0,286.80 H620.5 M332.0,275.35 H620.5 M332.0,263.90 H620.5 M332.0,252.45 H620.5 M332.0,241.00 H620.5 M332.0,229.55 H620.5 M332.0,218.10 H620.5 M332.0,206.65 H620.5 M332.0,195.20 H620.5 M332.0,183.75 H620.5 M332.0,172.30 H620.5 M332.0,160.85 H620.5 M332.0,149.40 H620.5 M332.0,137.95 H620.5 M332.0,126.50 H620.5 M332.0,115.05 H620.5 M332.0,103.60 H620.5 M332.0,92.15 H620.5 " stroke="#e3e3e3" stroke-width="0.6" fill="none"/><rect x="332.0" y="88.4" width="288.5" height="213.79999999999998" fill="none" stroke="#b5b5b5" stroke-width="0.6"/><polyline points="332.00,195.20 332.48,193.15 332.96,191.10 333.44,189.06 333.92,187.02 334.40,184.99 334.88,182.97 335.37,180.96 335.85,178.97 336.33,176.99 336.81,175.03 337.29,173.09 337.77,171.17 338.25,169.28 338.73,167.41 339.21,165.57 339.69,163.76 340.17,161.98 340.65,160.23 341.14,158.52 341.62,156.84 342.10,155.20 342.58,153.60 343.06,152.04 343.54,150.52 344.02,149.05 344.50,147.62 344.98,146.24 345.46,144.91 345.94,143.63 346.43,142.40 346.91,141.22 347.39,140.09 347.87,139.02 348.35,138.01 348.83,137.05 349.31,136.15 349.79,135.30 350.27,134.52 350.75,133.79 351.23,133.13 351.71,132.53 352.19,131.99 352.68,131.51 353.16,131.09 353.64,130.74 354.12,130.45 354.60,130.22 355.08,130.06 355.56,129.97 356.04,129.94 356.52,129.97 357.00,130.06 357.48,130.22 357.96,130.45 358.45,130.74 358.93,131.09 359.41,131.51 359.89,131.99 360.37,132.53 360.85,133.13 361.33,133.79 361.81,134.52 362.29,135.30 362.77,136.15 363.25,137.05 363.74,138.01 364.22,139.02 364.70,140.09 365.18,141.22 365.66,142.40 366.14,143.63 366.62,144.91 367.10,146.24 367.58,147.62 368.06,149.05 368.54,150.52 369.02,152.04 369.50,153.60 369.99,155.20 370.47,156.84 370.95,158.52 371.43,160.23 371.91,161.98 372.39,163.76 372.87,165.57 373.35,167.41 373.83,169.28 374.31,171.17 374.79,173.09 375.27,175.03 375.76,176.99 376.24,178.97 376.72,180.96 377.20,182.97 377.68,184.99 378.16,187.02 378.64,189.06 379.12,191.10 379.60,193.15 380.08,195.20 380.56,197.25 381.05,199.30 381.53,201.34 382.01,203.38 382.49,205.41 382.97,207.43 383.45,209.44 383.93,211.43 384.41,213.41 384.89,215.37 385.37,217.31 385.85,219.23 386.33,221.12 386.81,222.99 387.30,224.83 387.78,226.64 388.26,228.42 388.74,230.17 389.22,231.88 389.70,233.56 390.18,235.20 390.66,236.80 391.14,238.36 391.62,239.88 392.10,241.35 392.58,242.78 393.07,244.16 393.55,245.49 394.03,246.77 394.51,248.00 394.99,249.18 395.47,250.31 395.95,251.38 396.43,252.39 396.91,253.35 397.39,254.25 397.87,255.10 398.36,255.88 398.84,256.61 399.32,257.27 399.80,257.87 400.28,258.41 400.76,258.89 401.24,259.31 401.72,259.66 402.20,259.95 402.68,260.18 403.16,260.34 403.64,260.43 404.12,260.46 404.61,260.43 405.09,260.34 405.57,260.18 406.05,259.95 406.53,259.66 407.01,259.31 407.49,258.89 407.97,258.41 408.45,257.87 408.93,257.27 409.41,256.61 409.89,255.88 410.38,255.10 410.86,254.25 411.34,253.35 411.82,252.39 412.30,251.38 412.78,250.31 413.26,249.18 413.74,248.00 414.22,246.77 414.70,245.49 415.18,244.16 415.67,242.78 416.15,241.35 416.63,239.88 417.11,238.36 417.59,236.80 418.07,235.20 418.55,233.56 419.03,231.88 419.51,230.17 419.99,228.42 420.47,226.64 420.95,224.83 421.44,222.99 421.92,221.12 422.40,219.23 422.88,217.31 423.36,215.37 423.84,213.41 424.32,211.43 424.80,209.44 425.28,207.43 425.76,205.41 426.24,203.38 426.72,201.34 427.20,199.30 427.69,197.25 428.17,195.20 428.65,193.15 429.13,191.10 429.61,189.06 430.09,187.02 430.57,184.99 431.05,182.97 431.53,180.96 432.01,178.97 432.49,176.99 432.98,175.03 433.46,173.09 433.94,171.17 434.42,169.28 434.90,167.41 435.38,165.57 435.86,163.76 436.34,161.98 436.82,160.23 437.30,158.52 437.78,156.84 438.26,155.20 438.75,153.60 439.23,152.04 439.71,150.52 440.19,149.05 440.67,147.62 441.15,146.24 441.63,144.91 442.11,143.63 442.59,142.40 443.07,141.22 443.55,140.09 444.03,139.02 444.51,138.01 445.00,137.05 445.48,136.15 445.96,135.30 446.44,134.52 446.92,133.79 447.40,133.13 447.88,132.53 448.36,131.99 448.84,131.51 449.32,131.09 449.80,130.74 450.28,130.45 450.77,130.22 451.25,130.06 451.73,129.97 452.21,129.94 452.69,129.97 453.17,130.06 453.65,130.22 454.13,130.45 454.61,130.74 455.09,131.09 455.57,131.51 456.06,131.99 456.54,132.53 457.02,133.13 457.50,133.79 457.98,134.52 458.46,135.30 458.94,136.15 459.42,137.05 459.90,138.01 460.38,139.02 460.86,140.09 461.34,141.22 461.82,142.40 462.31,143.63 462.79,144.91 463.27,146.24 463.75,147.62 464.23,149.05 464.71,150.52 465.19,152.04 465.67,153.60 466.15,155.20 466.63,156.84 467.11,158.52 467.60,160.23 468.08,161.98 468.56,163.76 469.04,165.57 469.52,167.41 470.00,169.28 470.48,171.17 470.96,173.09 471.44,175.03 471.92,176.99 472.40,178.97 472.88,180.96 473.37,182.97 473.85,184.99 474.33,187.02 474.81,189.06 475.29,191.10 475.77,193.15 476.25,195.20 476.73,197.25 477.21,199.30 477.69,201.34 478.17,203.38 478.65,205.41 479.13,207.43 479.62,209.44 480.10,211.43 480.58,213.41 481.06,215.37 481.54,217.31 482.02,219.23 482.50,221.12 482.98,222.99 483.46,224.83 483.94,226.64 484.42,228.42 484.90,230.17 485.39,231.88 485.87,233.56 486.35,235.20 486.83,236.80 487.31,238.36 487.79,239.88 488.27,241.35 488.75,242.78 489.23,244.16 489.71,245.49 490.19,246.77 490.68,248.00 491.16,249.18 491.64,250.31 492.12,251.38 492.60,252.39 493.08,253.35 493.56,254.25 494.04,255.10 494.52,255.88 495.00,256.61 495.48,257.27 495.96,257.87 496.44,258.41 496.93,258.89 497.41,259.31 497.89,259.66 498.37,259.95 498.85,260.18 499.33,260.34 499.81,260.43 500.29,260.46 500.77,260.43 501.25,260.34 501.73,260.18 502.22,259.95 502.70,259.66 503.18,259.31 503.66,258.89 504.14,258.41 504.62,257.87 505.10,257.27 505.58,256.61 506.06,255.88 506.54,255.10 507.02,254.25 507.50,253.35 507.99,252.39 508.47,251.38 508.95,250.31 509.43,249.18 509.91,248.00 510.39,246.77 510.87,245.49 511.35,244.16 511.83,242.78 512.31,241.35 512.79,239.88 513.27,238.36 513.75,236.80 514.24,235.20 514.72,233.56 515.20,231.88 515.68,230.17 516.16,228.42 516.64,226.64 517.12,224.83 517.60,222.99 518.08,221.12 518.56,219.23 519.04,217.31 519.52,215.37 520.01,213.41 520.49,211.43 520.97,209.44 521.45,207.43 521.93,205.41 522.41,203.38 522.89,201.34 523.37,199.30 523.85,197.25 524.33,195.20 524.81,193.15 525.29,191.10 525.78,189.06 526.26,187.02 526.74,184.99 527.22,182.97 527.70,180.96 528.18,178.97 528.66,176.99 529.14,175.03 529.62,173.09 530.10,171.17 530.58,169.28 531.07,167.41 531.55,165.57 532.03,163.76 532.51,161.98 532.99,160.23 533.47,158.52 533.95,156.84 534.43,155.20 534.91,153.60 535.39,152.04 535.87,150.52 536.35,149.05 536.84,147.62 537.32,146.24 537.80,144.91 538.28,143.63 538.76,142.40 539.24,141.22 539.72,140.09 540.20,139.02 540.68,138.01 541.16,137.05 541.64,136.15 542.12,135.30 542.61,134.52 543.09,133.79 543.57,133.13 544.05,132.53 544.53,131.99 545.01,131.51 545.49,131.09 545.97,130.74 546.45,130.45 546.93,130.22 547.41,130.06 547.89,129.97 548.38,129.94 548.86,129.97 549.34,130.06 549.82,130.22 550.30,130.45 550.78,130.74 551.26,131.09 551.74,131.51 552.22,131.99 552.70,132.53 553.18,133.13 553.66,133.79 554.14,134.52 554.63,135.30 555.11,136.15 555.59,137.05 556.07,138.01 556.55,139.02 557.03,140.09 557.51,141.22 557.99,142.40 558.47,143.63 558.95,144.91 559.43,146.24 559.91,147.62 560.40,149.05 560.88,150.52 561.36,152.04 561.84,153.60 562.32,155.20 562.80,156.84 563.28,158.52 563.76,160.23 564.24,161.98 564.72,163.76 565.20,165.57 565.68,167.41 566.17,169.28 566.65,171.17 567.13,173.09 567.61,175.03 568.09,176.99 568.57,178.97 569.05,180.96 569.53,182.97 570.01,184.99 570.49,187.02 570.97,189.06 571.46,191.10 571.94,193.15 572.42,195.20 572.90,197.25 573.38,199.30 573.86,201.34 574.34,203.38 574.82,205.41 575.30,207.43 575.78,209.44 576.26,211.43 576.74,213.41 577.23,215.37 577.71,217.31 578.19,219.23 578.67,221.12 579.15,222.99 579.63,224.83 580.11,226.64 580.59,228.42 581.07,230.17 581.55,231.88 582.03,233.56 582.51,235.20 583.00,236.80 583.48,238.36 583.96,239.88 584.44,241.35 584.92,242.78 585.40,244.16 585.88,245.49 586.36,246.77 586.84,248.00 587.32,249.18 587.80,250.31 588.28,251.38 588.76,252.39 589.25,253.35 589.73,254.25 590.21,255.10 590.69,255.88 591.17,256.61 591.65,257.27 592.13,257.87 592.61,258.41 593.09,258.89 593.57,259.31 594.05,259.66 594.54,259.95 595.02,260.18 595.50,260.34 595.98,260.43 596.46,260.46 596.94,260.43 597.42,260.34 597.90,260.18 598.38,259.95 598.86,259.66 599.34,259.31 599.82,258.89 600.31,258.41 600.79,257.87 601.27,257.27 601.75,256.61 602.23,255.88 602.71,255.10 603.19,254.25 603.67,253.35 604.15,252.39 604.63,251.38 605.11,250.31 605.59,249.18 606.08,248.00 606.56,246.77 607.04,245.49 607.52,244.16 608.00,242.78 608.48,241.35 608.96,239.88 609.44,238.36 609.92,236.80 610.40,235.20 610.88,233.56 611.36,231.88 611.85,230.17 612.33,228.42 612.81,226.64 613.29,224.83 613.77,222.99 614.25,221.12 614.73,219.23 615.21,217.31 615.69,215.37 616.17,213.41 616.65,211.43 617.13,209.44 617.62,207.43 618.10,205.41 618.58,203.38 619.06,201.34 619.54,199.30 620.02,197.25 620.50,195.20" fill="none" stroke="#85606a" stroke-width="0.7"/><text x="329.6" y="93.85" font-size="5.4" fill="#333" text-anchor="end">4.5</text><text x="329.6" y="105.30" font-size="5.4" fill="#333" text-anchor="end">4.0</text><text x="329.6" y="116.75" font-size="5.4" fill="#333" text-anchor="end">3.5</text><text x="329.6" y="128.20" font-size="5.4" fill="#333" text-anchor="end">3.0</text><text x="329.6" y="139.65" font-size="5.4" fill="#333" text-anchor="end">2.5</text><text x="329.6" y="151.10" font-size="5.4" fill="#333" text-anchor="end">2.0</text><text x="329.6" y="162.55" font-size="5.4" fill="#333" text-anchor="end">1.5</text><text x="329.6" y="174.00" font-size="5.4" fill="#333" text-anchor="end">1.0</text><text x="329.6" y="185.45" font-size="5.4" fill="#333" text-anchor="end">500m</text><text x="329.6" y="196.90" font-size="5.4" fill="#333" text-anchor="end">0</text><text x="329.6" y="208.35" font-size="5.4" fill="#333" text-anchor="end">-500m</text><text x="329.6" y="219.80" font-size="5.4" fill="#333" text-anchor="end">-1.0</text><text x="329.6" y="231.25" font-size="5.4" fill="#333" text-anchor="end">-1.5</text><text x="329.6" y="242.70" font-size="5.4" fill="#333" text-anchor="end">-2.0</text><text x="329.6" y="254.15" font-size="5.4" fill="#333" text-anchor="end">-2.5</text><text x="329.6" y="265.60" font-size="5.4" fill="#333" text-anchor="end">-3.0</text><text x="329.6" y="277.05" font-size="5.4" fill="#333" text-anchor="end">-3.5</text><text x="329.6" y="288.50" font-size="5.4" fill="#333" text-anchor="end">-4.0</text><text x="329.6" y="299.95" font-size="5.4" fill="#333" text-anchor="end">-4.5</text><text x="332.00" y="309.3" font-size="5.4" fill="#333" text-anchor="middle">0</text><text x="351.23" y="309.3" font-size="5.4" fill="#333" text-anchor="middle">200u</text><text x="370.47" y="309.3" font-size="5.4" fill="#333" text-anchor="middle">400u</text><text x="389.70" y="309.3" font-size="5.4" fill="#333" text-anchor="middle">600u</text><text x="408.93" y="309.3" font-size="5.4" fill="#333" text-anchor="middle">800u</text><text x="428.17" y="309.3" font-size="5.4" fill="#333" text-anchor="middle">1.0m</text><text x="447.40" y="309.3" font-size="5.4" fill="#333" text-anchor="middle">1.2m</text><text x="466.63" y="309.3" font-size="5.4" fill="#333" text-anchor="middle">1.4m</text><text x="485.87" y="309.3" font-size="5.4" fill="#333" text-anchor="middle">1.6m</text><text x="505.10" y="309.3" font-size="5.4" fill="#333" text-anchor="middle">1.8m</text><text x="524.33" y="309.3" font-size="5.4" fill="#333" text-anchor="middle">2.0m</text><text x="543.57" y="309.3" font-size="5.4" fill="#333" text-anchor="middle">2.2m</text><text x="562.80" y="309.3" font-size="5.4" fill="#333" text-anchor="middle">2.4m</text><text x="582.03" y="309.3" font-size="5.4" fill="#333" text-anchor="middle">2.6m</text><text x="601.27" y="309.3" font-size="5.4" fill="#333" text-anchor="middle">2.8m</text><text x="620.50" y="309.3" font-size="5.4" fill="#333" text-anchor="middle">3.0m</text><text x="476" y="315.6" font-size="5.4" fill="#333" text-anchor="middle">Time (s)</text><text x="476.3" y="85.8" font-size="5" fill="#444" text-anchor="middle">Scope</text><text transform="translate(312,195.5) rotate(-90)" font-size="5.4" fill="#333" text-anchor="middle">Instantaneous Level (V)</text></svg>
<svg style="left:0;top:0" width="960" height="540" viewBox="0 0 960 540" font-family='Liberation Sans, Noto Sans CJK SC, sans-serif'><clipPath id="fc"><rect x="654.3" y="88.2" width="294.30000000000007" height="214.40000000000003"/></clipPath><path d="M683.83,88.2 V302.6 M701.11,88.2 V302.6 M707.67,88.2 V302.6 M713.36,88.2 V302.6 M718.38,88.2 V302.6 M781.93,88.2 V302.6 M799.21,88.2 V302.6 M805.77,88.2 V302.6 M811.46,88.2 V302.6 M816.48,88.2 V302.6 M880.03,88.2 V302.6 M897.31,88.2 V302.6 M903.87,88.2 V302.6 M909.56,88.2 V302.6 M914.58,88.2 V302.6 " stroke="#eeeeee" stroke-width="0.5" fill="none"/><path d="M671.57,88.2 V302.6 M693.34,88.2 V302.6 M722.87,88.2 V302.6 M752.40,88.2 V302.6 M769.67,88.2 V302.6 M791.44,88.2 V302.6 M820.97,88.2 V302.6 M850.50,88.2 V302.6 M867.77,88.2 V302.6 M889.54,88.2 V302.6 M919.07,88.2 V302.6 M752.40,88.2 V302.6 M654.3,100.60 H948.6 M654.3,113.22 H948.6 M654.3,125.85 H948.6 M654.3,138.47 H948.6 M654.3,151.10 H948.6 M654.3,163.72 H948.6 M654.3,176.35 H948.6 M654.3,188.97 H948.6 M654.3,201.60 H948.6 M654.3,214.22 H948.6 M654.3,226.85 H948.6 M654.3,239.47 H948.6 M654.3,252.10 H948.6 M654.3,264.73 H948.6 M654.3,277.35 H948.6 M654.3,289.98 H948.6 " stroke="#dedede" stroke-width="0.6" fill="none"/><rect x="654.3" y="88.2" width="294.30000000000007" height="214.40000000000003" fill="none" stroke="#b5b5b5" stroke-width="0.6"/><path d="M654.30,275.46 L660.25,280.51 L665.48,286.19 L670.13,291.87 L672.97,286.19 L675.64,281.14 L678.14,279.88 L680.51,284.92 L682.75,293.76 L684.36,296.92 L685.91,291.24 L687.40,290.61 L688.85,298.81 L690.25,295.02 L691.60,289.98 L693.34,288.71 L695.01,293.76 L696.62,291.24 L698.92,286.19 L701.11,283.03 L703.18,281.14 L705.17,284.92 L707.67,289.98 L710.04,293.76 L712.28,286.19 L714.41,283.66 L716.44,292.50 L718.38,303.86 L720.23,292.50 L722.01,286.19 L723.71,295.02 L725.35,303.86 L726.93,289.98 L728.82,286.19 L730.64,296.29 L732.38,288.71 L733.18,289.13 L734.59,293.17 L736.04,287.91 L737.45,305.12 L738.94,286.11 L740.17,305.12 L741.26,285.97 L742.91,300.97 L744.55,287.26 L745.53,299.95 L746.84,292.13 L747.93,305.12 L748.90,288.77 L750.34,305.12 L751.59,287.31 L752.88,305.12 L754.05,290.15 L755.41,292.54 L756.70,289.80 L757.71,305.12 L758.59,286.29 L759.89,305.12 L760.93,284.83 L761.85,301.33 L763.14,288.49 L763.96,297.83 L765.08,286.18 L765.88,305.12 L766.82,284.82 L767.69,300.29 L768.48,291.37 L769.49,299.77 L770.43,290.37 L771.45,300.18 L772.22,288.69 L773.03,305.12 L774.17,285.98 L775.25,305.12 L776.01,288.80 L776.71,295.67 L777.80,290.00 L778.77,305.12 L779.55,289.39 L780.20,305.12 L781.06,289.71 L781.82,305.12 L782.61,284.94 L783.42,305.12 L784.36,290.01 L785.28,305.12 L786.16,289.53 L786.99,305.12 L787.89,289.82 L788.65,293.54 L789.34,290.37 L790.19,305.12 L790.80,286.58 L791.59,305.12 L792.30,289.10 L793.03,305.12 L793.55,289.47 L794.30,305.12 L794.98,289.12 L795.46,299.53 L796.01,288.10 L796.52,305.12 L797.09,287.33 L797.64,305.12 L798.35,284.91 L798.99,305.12 L799.59,289.82 L800.02,305.12 L800.70,286.54 L801.28,301.15 L801.83,286.37 L802.49,305.12 L802.91,287.41 L803.53,305.12 L804.11,286.51 L804.58,293.25 L805.13,285.40 L805.69,297.65 L806.27,287.22 L806.71,305.12 L807.21,287.01 L807.70,305.12 L808.28,285.52 L808.70,305.12 L809.20,287.14 L809.71,305.12 L810.05,286.22 L810.50,305.12 L810.92,288.98 L811.33,305.12 L811.77,285.32 L812.07,305.12 L812.43,286.59 L812.76,305.12 L813.23,286.68 L813.69,305.12 L814.04,286.64 L814.40,305.12 L814.83,285.36 L815.20,297.94 L815.53,289.34 L815.94,305.12 L816.36,286.40 L816.64,298.89 L816.97,288.59 L817.29,305.12 L817.64,287.40 L818.02,305.12 L818.43,284.44 L818.67,305.12 L819.04,284.00 L819.35,305.12 L819.63,277.89 L819.87,305.12 L820.16,279.49 L820.40,299.24 L820.63,274.66 L820.93,305.12 L821.24,273.50 L821.48,295.29 L821.75,278.64 L822.03,305.12 L822.34,281.01 L822.60,305.12 L822.90,281.64 L823.22,305.12 L823.49,282.67 L823.83,300.57 L824.14,288.52 L824.43,305.12 L824.77,287.95 L825.11,305.12 L825.43,285.19 L825.73,305.12 L825.97,286.26 L826.28,295.67 L826.52,285.39 L826.80,292.70 L827.12,288.20 L827.38,293.77 L827.60,287.61 L827.92,305.12 L828.20,289.61 L828.52,300.77 L828.76,288.11 L828.98,305.12 L829.22,287.22 L829.54,305.12 L829.85,285.13 L830.19,305.12 L830.41,288.64 L830.67,305.12 L830.98,286.61 L831.31,305.12 L831.59,288.19 L831.92,305.12 L832.26,288.69 L832.54,292.78 L832.83,288.71 L833.11,305.12 L833.41,289.55 L833.67,296.78 L834.00,286.94 L834.30,305.12 L834.52,287.05 L834.87,305.12 L835.20,288.35 L835.43,305.12 L835.70,285.69 L835.96,297.13 L836.19,286.65 L836.51,300.19 L836.73,288.70 L837.03,305.12 L837.29,287.91 L837.51,305.12 L837.82,289.04 L838.07,305.12 L838.31,287.05 L838.57,305.12 L838.84,287.05 L839.08,305.12 L839.37,286.51 L839.70,305.12 L840.00,285.44 L840.31,305.12 L840.64,285.21 L840.89,305.12 L841.23,288.53 L841.46,293.49 L841.70,286.06 L841.93,305.12 L842.25,287.53 L842.48,305.12 L842.75,286.24 L842.98,305.12 L843.29,285.14 L843.57,300.32 L843.89,287.12 L844.12,305.12 L844.34,289.04 L844.63,305.12 L844.91,286.78 L845.15,305.12 L845.39,285.46 L845.61,293.15 L845.83,284.91 L846.15,305.12 L846.40,287.26 L846.67,305.12 L846.97,289.46 L847.29,305.12 L847.53,287.31 L847.80,305.12 L848.03,288.71 L848.25,305.12 L848.58,285.61 L848.91,305.12 L849.21,287.53 L849.49,305.12 L849.84,285.58 L850.18,305.12 L850.49,285.70 L850.83,297.75 L851.16,286.10 L851.48,305.12 L851.74,285.96 L852.00,305.12 L852.28,289.41 L852.58,305.12 L852.87,288.33 L853.13,295.45 L853.43,286.68 L853.70,305.12 L854.05,286.32 L854.36,305.12 L854.71,289.32 L855.02,305.12 L855.27,287.48 L855.51,305.12 L855.77,288.94 L856.11,305.12 L856.39,286.95 L856.74,296.32 L857.04,285.47 L857.34,305.12 L857.65,289.18 L857.93,299.92 L858.16,286.99 L858.38,305.12 L858.72,287.34 L859.02,305.12 L859.28,287.99 L859.57,305.12 L859.82,285.89 L860.03,305.12 L860.27,289.16 L860.59,305.12 L860.85,285.00 L861.07,305.12 L861.42,284.76 L861.75,305.12 L862.02,287.03 L862.31,299.18 L862.65,285.83 L863.00,305.12 L863.32,286.40 L863.62,305.12 L863.89,288.34 L864.18,305.12 L864.40,287.17 L864.68,305.12 L864.92,286.48 L865.24,305.12 L865.53,284.46 L865.77,294.85 L866.00,284.96 L866.29,305.12 L866.55,287.98 L866.84,305.12 L867.14,286.21 L867.37,305.12 L867.62,284.52 L867.83,293.57 L868.05,287.96 L868.35,305.12 L868.57,286.64 L868.79,305.12 L869.10,286.59 L869.36,305.12 L869.64,288.24 L869.95,305.12 L870.28,288.89 L870.60,305.12 L870.90,285.51 L871.17,305.12 L871.42,285.30 L871.72,305.12 L872.07,287.65 L872.38,305.12 L872.72,287.14 L872.94,305.12 L873.28,288.84 L873.57,305.12 L873.84,285.88 L874.16,305.12 L874.38,288.17 L874.60,305.12 L874.86,285.67 L875.11,305.12 L875.34,287.45 L875.60,305.12 L875.82,285.74 L876.16,305.12 L876.50,284.74 L876.83,305.12 L877.08,287.63 L877.42,305.12 L877.75,287.96 L878.02,305.12 L878.28,287.24 L878.51,305.12 L878.80,285.28 L879.13,305.12 L879.42,288.29 L879.75,305.12 L880.00,289.03 L880.29,305.12 L880.58,284.43 L880.90,305.12 L881.12,286.47 L881.34,305.12 L881.56,285.54 L881.86,300.59 L882.09,285.49 L882.34,305.12 L882.58,285.39 L882.89,305.12 L883.16,287.46 L883.44,295.40 L883.72,285.59 L884.06,305.12 L884.33,285.07 L884.66,305.12 L884.98,285.03 L885.28,292.87 L885.56,285.62 L885.83,297.61 L886.06,285.46 L886.30,298.02 L886.54,287.00 L886.88,305.12 L887.10,287.56 L887.40,305.12 L887.72,288.18 L887.99,305.12 L888.28,284.62 L888.51,305.12 L888.75,287.98 L889.06,305.12 L889.35,287.94 L889.60,305.12 L889.83,285.34 L890.12,305.12 L890.44,286.68 L890.78,305.12 L891.12,287.34 L891.46,305.12 L891.74,287.93 L892.08,305.12 L892.40,287.12 L892.68,305.12 L892.93,284.17 L893.18,305.12 L893.39,286.68 L893.71,305.12 L894.02,286.03 L894.25,305.12 L894.51,287.71 L894.81,296.78 L895.15,287.66 L895.39,305.12 L895.70,288.95 L896.03,293.86 L896.25,287.64 L896.47,305.12 L896.75,286.66 L897.08,296.15 L897.33,285.10 L897.67,305.12 L897.89,284.91 L898.18,305.12 L898.46,288.16 L898.72,298.59 L898.94,287.43 L899.25,305.12 L899.51,285.57 L899.77,305.12 L900.05,284.20 L900.26,295.56 L900.52,285.45 L900.81,305.12 L901.09,288.84 L901.33,294.27 L901.62,287.47 L901.91,305.12 L902.16,287.24 L902.46,305.12 L902.71,287.90 L902.96,305.12 L903.31,286.13 L903.56,305.12 L903.89,288.41 L904.11,305.12 L904.42,285.41 L904.68,305.12 L905.01,285.96 L905.25,305.12 L905.48,288.24 L905.70,305.12 L906.04,286.76 L906.34,305.12 L906.66,284.83 L906.92,305.12 L907.19,288.74 L907.49,305.12 L907.84,284.97 L908.14,305.12 L908.35,287.20 L908.65,305.12 L908.87,286.96 L909.19,305.12 L909.52,285.82 L909.84,305.12 L910.17,286.12 L910.45,305.12 L910.68,285.31 L910.99,296.78 L911.32,287.81 L911.56,295.80 L911.78,287.58 L912.09,305.12 L912.34,284.24 L912.62,305.12 L912.85,284.02 L913.18,305.12 L913.47,286.02 L913.72,305.12 L914.05,283.92 L914.28,296.02 L914.61,287.33 L914.90,299.21 L915.22,287.82 L915.44,305.12 L915.66,287.84 L915.96,293.04 L916.21,285.45 L916.48,305.12 L916.77,284.80 L917.01,305.12 L917.28,288.01 L917.57,305.12 L917.81,286.17 L918.10,305.12 L918.35,285.57 L918.66,305.12 L918.89,284.02 L919.16,305.12 L919.43,285.64 L919.75,305.12 L920.06,286.31 L920.39,293.93 L920.66,286.55 L921.00,305.12 L921.28,286.10 L921.62,305.12 L921.87,288.38 L922.21,305.12 L922.52,285.74 L922.77,305.12 L923.06,288.29 L923.34,305.12 L923.62,286.70 L923.93,305.12 L924.21,287.46 L924.47,305.12 L924.72,288.28 L925.02,292.80 L925.35,286.56 L925.67,299.38 L925.96,284.21 L926.28,305.12 L926.50,285.98 L926.75,301.33 L927.00,287.01 L927.34,305.12 L927.66,286.65 L927.95,305.12 L928.17,288.42 L928.45,298.62 L928.79,283.82 L929.03,305.12 L929.28,284.08 L929.61,299.61 L929.87,286.26 L930.20,305.12 L930.55,287.56 L930.78,305.12 L931.12,288.30 L931.43,305.12 L931.68,284.16 L931.91,295.04 L932.22,283.97 L932.44,305.12 L932.68,287.03 L932.92,305.12 L933.15,287.37 L933.48,305.12 L933.74,285.29 L933.98,296.12 L934.23,284.00 L934.48,305.12 L934.78,288.06 L935.06,297.45 L935.35,288.27 L935.60,305.12 L935.84,284.58 L936.09,305.12 L936.41,287.28 L936.70,305.12 L936.93,284.11 L937.21,301.04 L937.52,286.59 L937.76,296.92 L938.04,285.32 L938.35,305.12 L938.67,285.94 L938.99,305.12 L939.30,285.91 L939.62,299.80 L939.85,285.48 L940.12,305.12 L940.44,284.61 L940.69,305.12 L940.96,287.35 L941.24,305.12 L941.46,285.52 L941.75,305.12 L942.08,287.54 L942.29,305.12 L942.57,286.29 L942.82,305.12 L943.14,288.05 L943.43,296.31 L943.75,287.23 L944.00,305.12 L944.22,286.86 L944.50,305.12 L944.75,285.52 L945.07,305.12 L945.31,287.13 L945.61,305.12 L945.94,284.54 L946.21,305.12 L946.47,287.31 L946.75,300.97 L947.06,283.56 L947.34,305.12 L947.65,288.15 L947.99,305.12 L948.22,286.43 L948.49,305.12" fill="none" stroke="#3c4f9e" stroke-width="0.55" stroke-linejoin="round" clip-path="url(#fc)"/><path d="M654.30,275.46 L660.25,278.61 L665.48,281.77 L670.13,285.56 L672.97,281.14 L675.64,276.09 L678.14,274.19 L680.51,275.46 L683.83,284.92 L686.91,292.50 L688.85,294.39 L691.60,288.71 L694.18,286.19 L695.82,292.50 L697.40,302.60 L698.92,298.81 L701.11,287.45 L703.86,281.77 L706.44,279.88 L708.87,282.40 L711.73,289.98 L714.41,293.76 L716.94,298.81 L718.85,303.86 L720.23,289.98 L722.01,279.88 L723.71,284.92 L725.35,293.76 L726.93,289.98 L728.45,286.19 L729.92,297.55 L731.34,289.98 L732.72,282.40 L733.52,284.96 L734.66,293.45 L736.16,289.34 L737.35,300.19 L738.72,291.03 L739.76,305.12 L740.85,286.82 L742.20,305.12 L743.70,289.74 L745.19,305.12 L746.55,287.22 L747.73,292.76 L749.16,289.55 L750.28,295.50 L751.26,288.65 L752.43,296.12 L753.72,290.93 L754.79,305.12 L756.15,290.75 L757.06,305.12 L757.94,290.08 L759.23,305.12 L760.25,289.31 L761.23,305.12 L762.47,287.91 L763.32,305.12 L764.52,286.71 L765.57,299.23 L766.82,287.53 L768.05,299.86 L768.83,288.79 L769.95,305.12 L771.02,284.77 L771.98,292.95 L773.15,286.37 L774.28,305.12 L775.14,290.22 L776.01,305.12 L776.76,285.09 L777.46,299.43 L778.34,290.29 L779.32,305.12 L780.06,288.54 L780.81,297.41 L781.80,285.90 L782.56,295.26 L783.44,285.80 L784.12,305.12 L784.81,288.53 L785.59,296.41 L786.48,290.44 L787.15,305.12 L787.91,285.76 L788.79,305.12 L789.36,287.48 L789.97,305.12 L790.69,288.04 L791.44,305.12 L791.96,288.60 L792.74,300.08 L793.31,286.71 L793.94,305.12 L794.56,290.33 L795.18,305.12 L795.87,287.54 L796.50,305.12 L797.05,285.39 L797.76,305.12 L798.46,287.75 L799.07,295.39 L799.59,288.77 L800.10,305.12 L800.79,288.62 L801.32,305.12 L801.95,287.81 L802.42,305.12 L802.89,290.01 L803.35,305.12 L803.96,287.64 L804.46,305.12 L804.87,287.27 L805.45,305.12 L805.88,285.68 L806.48,305.12 L806.99,290.12 L807.42,298.90 L807.81,285.76 L808.32,305.12 L808.75,286.61 L809.10,305.12 L809.63,286.74 L810.16,305.12 L810.68,289.25 L811.12,305.12 L811.46,286.32 L811.91,305.12 L812.33,286.11 L812.74,296.01 L813.10,289.43 L813.56,305.12 L813.88,287.89 L814.28,305.12 L814.66,285.65 L815.00,305.12 L815.39,286.23 L815.81,298.58 L816.25,285.02 L816.57,305.12 L816.96,285.79 L817.28,305.12 L817.65,286.05 L817.93,305.12 L818.24,287.17 L818.54,305.12 L818.91,281.81 L819.18,305.12 L819.46,279.19 L819.71,305.12 L820.06,277.24 L820.37,296.60 L820.65,274.69 L820.95,292.67 L821.23,277.08 L821.49,297.88 L821.71,279.17 L822.06,305.12 L822.37,278.56 L822.62,305.12 L822.85,281.03 L823.14,305.12 L823.43,283.64 L823.65,305.12 L823.92,287.58 L824.18,305.12 L824.47,286.14 L824.76,305.12 L824.99,288.10 L825.24,298.96 L825.52,287.12 L825.77,305.12 L826.12,289.66 L826.41,305.12 L826.75,289.02 L827.09,305.12 L827.39,289.21 L827.62,292.77 L827.94,289.36 L828.26,305.12 L828.57,285.09 L828.86,305.12 L829.10,286.95 L829.44,295.62 L829.67,286.16 L829.89,305.12 L830.22,288.87 L830.44,305.12 L830.74,289.03 L831.06,301.34 L831.38,286.94 L831.70,305.12 L832.00,289.03 L832.26,305.12 L832.55,287.21 L832.88,297.68 L833.10,288.10 L833.40,305.12 L833.73,288.67 L833.96,294.31 L834.18,286.84 L834.45,295.91 L834.74,285.74 L835.02,305.12 L835.31,285.13 L835.56,293.92 L835.86,285.66 L836.20,305.12 L836.54,289.03 L836.80,305.12 L837.04,287.21 L837.26,294.55 L837.50,287.84 L837.74,297.28 L838.02,288.43 L838.32,305.12 L838.67,285.85 L838.90,305.12 L839.19,286.52 L839.46,305.12 L839.68,285.10 L839.99,305.12 L840.26,285.82 L840.49,305.12 L840.76,287.27 L841.02,305.12 L841.33,287.76 L841.56,305.12 L841.89,285.00 L842.22,305.12 L842.54,286.21 L842.86,305.12 L843.17,286.53 L843.47,292.97 L843.81,288.87 L844.10,305.12 L844.38,284.93 L844.68,305.12 L844.97,284.95 L845.29,305.12 L845.58,287.59 L845.81,305.12 L846.02,287.90 L846.25,305.12 L846.52,287.83 L846.83,294.44 L847.15,288.19 L847.45,305.12 L847.69,284.73 L848.03,305.12 L848.27,289.06 L848.58,305.12 L848.82,285.00 L849.17,295.26 L849.52,288.78 L849.83,305.12 L850.15,287.84 L850.44,305.12 L850.77,289.23 L851.02,305.12 L851.34,288.91 L851.57,305.12 L851.79,287.35 L852.02,298.20 L852.32,287.85 L852.64,305.12 L852.91,285.89 L853.24,305.12 L853.56,285.07 L853.81,305.12 L854.09,285.69 L854.40,305.12 L854.73,285.43 L855.03,305.12 L855.24,287.11 L855.58,305.12 L855.91,287.29 L856.24,305.12 L856.55,288.48 L856.88,305.12 L857.17,288.88 L857.48,296.15 L857.81,288.16 L858.04,305.12 L858.34,287.28 L858.56,305.12 L858.80,287.51 L859.07,305.12 L859.41,285.17 L859.74,305.12 L859.98,288.21 L860.23,305.12 L860.47,288.95 L860.71,305.12 L861.05,289.16 L861.29,305.12 L861.60,289.34 L861.91,305.12 L862.12,287.35 L862.40,305.12 L862.70,288.95 L863.02,298.95 L863.25,288.88 L863.47,305.12 L863.71,288.65 L864.04,305.12 L864.33,286.91 L864.65,305.12 L864.87,289.10 L865.08,305.12 L865.36,286.27 L865.62,301.33 L865.88,286.48 L866.19,305.12 L866.54,286.63 L866.86,305.12 L867.19,285.31 L867.41,305.12 L867.74,285.18 L867.99,305.12 L868.34,286.25 L868.66,305.12 L868.90,288.10 L869.23,300.85 L869.50,286.48 L869.83,305.12 L870.07,288.80 L870.31,305.12 L870.58,288.71 L870.87,305.12 L871.09,287.95 L871.31,305.12 L871.64,284.86 L871.96,305.12 L872.19,285.68 L872.51,305.12 L872.85,287.96 L873.11,305.12 L873.44,285.42 L873.77,305.12 L874.09,284.56 L874.40,299.94 L874.61,288.27 L874.85,305.12 L875.09,287.46 L875.43,305.12 L875.72,286.49 L875.96,305.12 L876.28,285.48 L876.57,297.36 L876.79,286.95 L877.13,305.12 L877.47,287.52 L877.80,305.12 L878.14,285.85 L878.47,305.12 L878.69,286.40 L879.02,305.12 L879.32,288.17 L879.53,305.12 L879.85,285.33 L880.09,305.12 L880.38,288.18 L880.64,305.12 L880.89,285.77 L881.15,305.12 L881.44,284.54 L881.69,305.12 L881.94,287.59 L882.26,305.12 L882.50,285.62 L882.79,305.12 L883.07,286.17 L883.36,305.12 L883.63,285.29 L883.90,305.12 L884.24,288.22 L884.47,305.12 L884.78,288.64 L885.00,305.12 L885.25,286.05 L885.52,305.12 L885.87,285.53 L886.21,305.12 L886.50,285.12 L886.76,305.12 L887.07,285.36 L887.30,305.12 L887.57,287.50 L887.80,305.12 L888.11,288.36 L888.33,305.12 L888.63,286.00 L888.98,305.12 L889.33,285.38 L889.54,295.12 L889.79,287.87 L890.09,305.12 L890.38,287.26 L890.62,305.12 L890.87,288.45 L891.20,305.12 L891.48,285.42 L891.74,295.45 L892.09,288.61 L892.42,305.12 L892.73,287.27 L893.04,294.64 L893.28,285.68 L893.61,305.12 L893.89,284.46 L894.13,305.12 L894.42,288.02 L894.68,305.12 L895.03,287.30 L895.36,305.12 L895.62,286.09 L895.88,305.12 L896.15,285.49 L896.38,305.12 L896.69,286.43 L896.96,305.12 L897.29,285.76 L897.57,305.12 L897.84,286.85 L898.11,305.12 L898.33,287.85 L898.54,305.12 L898.80,287.08 L899.04,305.12 L899.28,286.74 L899.53,305.12 L899.81,285.19 L900.02,305.12 L900.29,284.55 L900.56,305.12 L900.90,285.59 L901.12,293.89 L901.35,285.04 L901.69,305.12 L901.91,284.32 L902.18,305.12 L902.50,286.27 L902.74,305.12 L903.06,288.16 L903.28,305.12 L903.49,287.42 L903.77,305.12 L904.03,288.77 L904.28,305.12 L904.52,286.22 L904.74,305.12 L905.08,284.12 L905.38,305.12 L905.67,287.63 L905.92,305.12 L906.17,286.63 L906.41,305.12 L906.76,285.08 L907.11,305.12 L907.36,284.68 L907.70,305.12 L907.97,284.57 L908.24,305.12 L908.50,285.00 L908.76,300.14 L909.00,288.48 L909.22,305.12 L909.47,286.70 L909.79,295.58 L910.04,287.22 L910.29,305.12 L910.50,287.44 L910.78,300.89 L911.02,285.07 L911.30,305.12 L911.61,286.52 L911.95,305.12 L912.16,284.26 L912.49,293.53 L912.75,285.71 L913.05,305.12 L913.31,284.59 L913.60,305.12 L913.82,288.46 L914.08,298.19 L914.43,285.22 L914.71,305.12 L914.99,285.79 L915.24,305.12 L915.58,285.82 L915.89,305.12 L916.20,287.84 L916.48,305.12 L916.71,287.17 L917.05,293.87 L917.33,285.61 L917.64,305.12 L917.93,286.96 L918.14,296.91 L918.47,288.22 L918.74,305.12 L918.98,286.50 L919.26,305.12 L919.57,285.34 L919.81,305.12 L920.04,287.05 L920.37,305.12 L920.58,284.72 L920.89,305.12 L921.22,283.86 L921.44,305.12 L921.69,286.53 L922.03,305.12 L922.37,288.33 L922.67,305.12 L922.91,285.80 L923.19,305.12 L923.45,284.20 L923.71,305.12 L923.94,287.21 L924.24,305.12 L924.46,287.44 L924.71,293.81 L925.03,284.67 L925.32,305.12 L925.64,287.05 L925.89,305.12 L926.13,286.10 L926.36,305.12 L926.59,288.47 L926.82,305.12 L927.12,284.64 L927.42,305.12 L927.68,288.22 L928.00,305.12 L928.23,287.06 L928.54,305.12 L928.77,286.68 L929.06,305.12 L929.39,287.85 L929.72,305.12 L929.96,287.69 L930.26,305.12 L930.53,286.32 L930.83,305.12 L931.08,286.39 L931.35,296.95 L931.60,287.15 L931.91,305.12 L932.14,288.51 L932.37,305.12 L932.67,287.74 L932.94,305.12 L933.29,286.96 L933.55,305.12 L933.85,287.34 L934.16,305.12 L934.44,288.15 L934.70,300.22 L934.98,286.27 L935.21,305.12 L935.51,287.62 L935.82,305.12 L936.14,287.96 L936.38,305.12 L936.67,288.32 L936.98,301.18 L937.31,286.60 L937.62,299.79 L937.92,284.32 L938.24,305.12 L938.57,287.22 L938.80,305.12 L939.11,285.93 L939.39,305.12 L939.60,283.94 L939.90,305.12 L940.18,284.13 L940.46,305.12 L940.78,287.70 L941.04,295.82 L941.27,285.92 L941.48,305.12 L941.81,284.78 L942.07,294.60 L942.41,287.24 L942.69,305.12 L942.99,287.92 L943.33,305.12 L943.54,284.78 L943.89,305.12 L944.22,286.13 L944.53,305.12 L944.77,288.28 L945.09,296.53 L945.38,288.00 L945.62,305.12 L945.97,284.40 L946.24,305.12 L946.59,285.90 L946.87,305.12 L947.10,285.58 L947.39,305.12 L947.61,288.15 L947.89,305.12 L948.12,286.40 L948.37,298.15" fill="none" stroke="#a3202e" stroke-width="0.6" stroke-linejoin="round" clip-path="url(#fc)"/><path d="M816.48,302.6 L816.48,293.76 L948.6,291.24 L948.6,302.6 Z" fill="#a3202e" opacity="0.55" clip-path="url(#fc)"/><path d="M820.72,289.98 V100.60" stroke="#3c4f9e" stroke-width="0.6" fill="none"/><path d="M821.17,289.98 V100.90" stroke="#a3202e" stroke-width="0.6" fill="none"/><path d="M850.25,289.98 V273.56" stroke="#3c4f9e" stroke-width="0.5" fill="none"/><path d="M850.70,289.98 V273.86" stroke="#a3202e" stroke-width="0.5" fill="none"/><path d="M867.52,289.98 V253.36" stroke="#3c4f9e" stroke-width="0.5" fill="none"/><path d="M867.97,289.98 V253.66" stroke="#a3202e" stroke-width="0.5" fill="none"/><path d="M879.78,289.98 V265.99" stroke="#3c4f9e" stroke-width="0.5" fill="none"/><path d="M880.23,289.98 V266.29" stroke="#a3202e" stroke-width="0.5" fill="none"/><path d="M889.29,289.98 V283.66" stroke="#3c4f9e" stroke-width="0.5" fill="none"/><path d="M889.74,289.98 V283.96" stroke="#a3202e" stroke-width="0.5" fill="none"/><path d="M897.06,289.98 V281.14" stroke="#3c4f9e" stroke-width="0.5" fill="none"/><path d="M897.51,289.98 V281.44" stroke="#a3202e" stroke-width="0.5" fill="none"/><path d="M903.62,289.98 V282.40" stroke="#3c4f9e" stroke-width="0.5" fill="none"/><path d="M904.07,289.98 V282.70" stroke="#a3202e" stroke-width="0.5" fill="none"/><path d="M914.33,289.98 V279.24" stroke="#3c4f9e" stroke-width="0.5" fill="none"/><path d="M914.78,289.98 V279.54" stroke="#a3202e" stroke-width="0.5" fill="none"/><path d="M922.88,289.98 V281.14" stroke="#3c4f9e" stroke-width="0.5" fill="none"/><path d="M923.33,289.98 V281.44" stroke="#a3202e" stroke-width="0.5" fill="none"/><path d="M930.00,289.98 V282.40" stroke="#3c4f9e" stroke-width="0.5" fill="none"/><path d="M930.45,289.98 V282.70" stroke="#a3202e" stroke-width="0.5" fill="none"/><path d="M936.09,289.98 V283.66" stroke="#3c4f9e" stroke-width="0.5" fill="none"/><path d="M936.54,289.98 V283.96" stroke="#a3202e" stroke-width="0.5" fill="none"/><path d="M818.77,289.98 L820.07,273.56 L820.57,226.85 L821.37,226.85 L821.87,273.56 L823.17,289.98 Z" fill="#7a2a48" opacity="0.85"/><text x="652" y="89.67" font-size="5.4" fill="#333" text-anchor="end">+10</text><text x="652" y="102.30" font-size="5.4" fill="#333" text-anchor="end">0</text><text x="652" y="114.92" font-size="5.4" fill="#333" text-anchor="end">-10</text><text x="652" y="127.55" font-size="5.4" fill="#333" text-anchor="end">-20</text><text x="652" y="140.17" font-size="5.4" fill="#333" text-anchor="end">-30</text><text x="652" y="152.80" font-size="5.4" fill="#333" text-anchor="end">-40</text><text x="652" y="165.42" font-size="5.4" fill="#333" text-anchor="end">-50</text><text x="652" y="178.05" font-size="5.4" fill="#333" text-anchor="end">-60</text><text x="652" y="190.67" font-size="5.4" fill="#333" text-anchor="end">-70</text><text x="652" y="203.30" font-size="5.4" fill="#333" text-anchor="end">-80</text><text x="652" y="215.92" font-size="5.4" fill="#333" text-anchor="end">-90</text><text x="652" y="228.55" font-size="5.4" fill="#333" text-anchor="end">-100</text><text x="652" y="241.17" font-size="5.4" fill="#333" text-anchor="end">-110</text><text x="652" y="253.80" font-size="5.4" fill="#333" text-anchor="end">-120</text><text x="652" y="266.43" font-size="5.4" fill="#333" text-anchor="end">-130</text><text x="652" y="279.05" font-size="5.4" fill="#333" text-anchor="end">-140</text><text x="652" y="291.68" font-size="5.4" fill="#333" text-anchor="end">-150</text><text x="652" y="304.30" font-size="5.4" fill="#333" text-anchor="end">-160</text><text x="654.30" y="309.3" font-size="5.4" fill="#333" text-anchor="middle">20</text><text x="671.57" y="309.3" font-size="5.4" fill="#333" text-anchor="middle">30</text><text x="693.34" y="309.3" font-size="5.4" fill="#333" text-anchor="middle">50</text><text x="722.87" y="309.3" font-size="5.4" fill="#333" text-anchor="middle">100</text><text x="752.40" y="309.3" font-size="5.4" fill="#333" text-anchor="middle">200</text><text x="769.67" y="309.3" font-size="5.4" fill="#333" text-anchor="middle">300</text><text x="791.44" y="309.3" font-size="5.4" fill="#333" text-anchor="middle">500</text><text x="820.97" y="309.3" font-size="5.4" fill="#333" text-anchor="middle">1k</text><text x="850.50" y="309.3" font-size="5.4" fill="#333" text-anchor="middle">2k</text><text x="867.77" y="309.3" font-size="5.4" fill="#333" text-anchor="middle">3k</text><text x="889.54" y="309.3" font-size="5.4" fill="#333" text-anchor="middle">5k</text><text x="919.07" y="309.3" font-size="5.4" fill="#333" text-anchor="middle">10k</text><text x="948.60" y="309.3" font-size="5.4" fill="#333" text-anchor="middle">20k</text><text x="801.3" y="315.6" font-size="5.4" fill="#333" text-anchor="middle">Frequency (Hz)</text><text x="801.3" y="85.8" font-size="5" fill="#444" text-anchor="middle" font-family="Liberation Mono, monospace">FFT</text><text transform="translate(638.6,195.5) rotate(-90)" font-size="5.4" fill="#333" text-anchor="middle">Level (dBrA)</text></svg>
<div style="left:304.50px;top:320.00px;width:655.50px;height:2.20px;background:#d0d0d0;"></div>
<div style="left:304.50px;top:322.20px;width:655.50px;height:10.60px;background:#e6e6e6;"></div>
<div style="left:306.20px;top:324.40px;width:5.60px;height:5.60px;background:#22384a;border-radius:0.6px;"></div>
<div style="left:308.50px;top:325.20px;width:1.00px;height:4.00px;background:#fff;"></div>
<div style="left:307.00px;top:326.70px;width:4.00px;height:1.00px;background:#fff;"></div>
<span id="t91" style="top:323px;height:8px;line-height:8px;font-size:6px;color:#1c2b33;white-space:nowrap;letter-spacing:0.090px;left:313.00px;">Add Meter</span>
<svg style="left:345.30px;top:327.20px" width="2" height="1.6" viewBox="0 0 10 10" preserveAspectRatio="none"><path d="M0,0 H10 L5,10 Z" fill="#333"/></svg>
<div style="left:352.60px;top:324.20px;width:5.80px;height:6.00px;background:#f6f8f9;border:0.6px solid #22384a;box-sizing:border-box;"></div>
<div style="left:355.30px;top:326.60px;width:3.60px;height:3.60px;background:#22384a;border-radius:0.5px;"></div>
<span id="t92" style="top:323px;height:8px;line-height:8px;font-size:6px;color:#1c2b33;white-space:nowrap;letter-spacing:-0.015px;left:359.70px;">Save Meter Data</span>
<div style="left:410.20px;top:324.40px;width:5.80px;height:5.80px;background:#22384a;border-radius:0.6px;"></div>
<svg style="left:411.6px;top:325.6px" width="3.4" height="3.4" viewBox="0 0 10 10"><path d="M1,0 L9,5 L1,10 Z" fill="#fff"/></svg>
<span id="t93" style="top:323px;height:8px;line-height:8px;font-size:6px;color:#1c2b33;white-space:nowrap;letter-spacing:0.059px;left:417.50px;">Regulate</span>
<svg style="left:941.6px;top:324.6px" width="5.5" height="5.5" viewBox="0 0 10 10"><path d="M5,1 L8,5 H2 Z" fill="#2b4d7b"/><path d="M1,8 H9" stroke="#2b4d7b" stroke-width="1.6"/></svg>
<div style="left:304.50px;top:332.80px;width:655.50px;height:184.00px;background:#c4ccd0;"></div>
<div style="left:304.70px;top:333.60px;width:322.00px;height:73.20px;background:#dce8ec;"></div>
<span id="t94" style="top:336px;height:9px;line-height:9px;font-size:6.8px;color:#000;white-space:nowrap;font-weight:bold;letter-spacing:0.203px;left:307.10px;">RMS Level</span>
<div style="left:346.30px;top:334.60px;width:32.00px;height:10.40px;background:#fff;"></div>
<span id="t95" style="top:337px;height:7px;line-height:7px;font-size:5.2px;color:#333;white-space:nowrap;letter-spacing:-0.208px;left:348.30px;">Vrms</span>
<svg style="left:374.20px;top:339.75px" width="1.8" height="1.5" viewBox="0 0 10 10" preserveAspectRatio="none"><path d="M0,0 H10 L5,10 Z" fill="#333"/></svg>
<div style="left:380.20px;top:337.00px;width:6.60px;height:5.80px;background:#e9eff1;border:0.7px solid #263a47;box-sizing:border-box;"></div>
<div style="left:381.60px;top:339.10px;width:3.80px;height:0.80px;background:#263a47;"></div>
<div style="left:380.90px;top:337.60px;width:5.20px;height:0.90px;background:#263a47;"></div>
<svg style="left:387.90px;top:339.75px" width="1.8" height="1.5" viewBox="0 0 10 10" preserveAspectRatio="none"><path d="M0,0 H10 L5,10 Z" fill="#333"/></svg>
<svg style="left:392.00px;top:336.90px" width="6.2" height="6.2" viewBox="0 0 10 10"><rect x="0" y="0" width="10" height="10" rx="1.2" fill="#263a47"/><circle cx="5" cy="5" r="2.7" fill="#fff"/><circle cx="5" cy="5" r="1" fill="#263a47"/></svg>
<svg style="left:611.90px;top:337.60px" width="5" height="5" viewBox="0 0 10 10"><path d="M4,1.5 H1.5 V8.5 H8.5 V6" fill="none" stroke="#2a4d85" stroke-width="1.5"/><path d="M5,5 L9,1 M5.5,1 H9 V4.5" fill="none" stroke="#2a4d85" stroke-width="1.5"/></svg>
<svg style="left:620.50px;top:338.20px" width="4" height="4" viewBox="0 0 10 10"><path d="M1,1 L9,9 M9,1 L1,9" fill="none" stroke="#263a47" stroke-width="1.6"/></svg>
<div style="left:386.70px;top:347.80px;width:236.00px;height:58.00px;background:#000;"></div>
<div style="left:386.70px;top:367.80px;width:236.00px;height:17.80px;background:#8a8a8a;"></div>
<div style="left:386.70px;top:376.20px;width:236.00px;height:0.80px;background:#adadad;"></div>
<div style="left:386.70px;top:367.80px;width:164.00px;height:8.00px;background:#1fde1f;"></div>
<div style="left:386.70px;top:371.30px;width:163.40px;height:0.80px;background:#101010;"></div>
<div style="left:386.70px;top:377.50px;width:164.00px;height:8.10px;background:#1fde1f;"></div>
<div style="left:386.70px;top:381.00px;width:163.40px;height:0.80px;background:#101010;"></div>
<div style="left:306.70px;top:376.40px;width:79.00px;height:0.60px;background:#c2cdd2;"></div>
<span id="t96" style="top:353px;height:19px;line-height:19px;font-size:14.4px;color:#222;white-space:nowrap;letter-spacing:-0.402px;left:308.10px;">Ch1</span>
<svg style="left:380.60px;top:359.80px" width="4.4" height="4.8" viewBox="0 0 10 10" preserveAspectRatio="none"><path d="M0,0 H10 L5,10 Z" fill="#111"/></svg>
<span id="t97" style="top:348px;height:19px;line-height:19px;font-size:14.2px;color:#52d552;white-space:nowrap;letter-spacing:0.097px;left:531.50px;">2.014</span>
<span id="t98" style="top:348px;height:19px;line-height:19px;font-size:14.2px;color:#52d552;white-space:nowrap;letter-spacing:0.305px;left:586.00px;">Vrms</span>
<span id="t99" style="top:382px;height:19px;line-height:19px;font-size:14.4px;color:#222;white-space:nowrap;letter-spacing:-0.402px;left:308.10px;">Ch2</span>
<svg style="left:380.60px;top:389.60px" width="4.4" height="4.8" viewBox="0 0 10 10" preserveAspectRatio="none"><path d="M0,0 H10 L5,10 Z" fill="#111"/></svg>
<span id="t100" style="top:386px;height:19px;line-height:19px;font-size:14.2px;color:#52d552;white-space:nowrap;letter-spacing:0.109px;left:531.50px;">2.011</span>
<span id="t101" style="top:386px;height:19px;line-height:19px;font-size:14.2px;color:#52d552;white-space:nowrap;letter-spacing:0.305px;left:586.00px;">Vrms</span>
<div style="left:628.60px;top:333.60px;width:321.40px;height:73.20px;background:#dce8ec;"></div>
<span id="t102" style="top:336px;height:9px;line-height:9px;font-size:6.8px;color:#000;white-space:nowrap;font-weight:bold;letter-spacing:0.479px;left:631.00px;">THD+N Ratio</span>
<div style="left:681.00px;top:334.60px;width:28.00px;height:10.40px;background:#fff;"></div>
<span id="t103" style="top:337px;height:7px;line-height:7px;font-size:5.2px;color:#333;white-space:nowrap;letter-spacing:-0.208px;left:683.00px;">%</span>
<svg style="left:704.90px;top:339.75px" width="1.8" height="1.5" viewBox="0 0 10 10" preserveAspectRatio="none"><path d="M0,0 H10 L5,10 Z" fill="#333"/></svg>
<div style="left:710.60px;top:337.00px;width:6.60px;height:5.80px;background:#e9eff1;border:0.7px solid #263a47;box-sizing:border-box;"></div>
<div style="left:712.00px;top:339.10px;width:3.80px;height:0.80px;background:#263a47;"></div>
<div style="left:711.30px;top:337.60px;width:5.20px;height:0.90px;background:#263a47;"></div>
<svg style="left:718.30px;top:339.75px" width="1.8" height="1.5" viewBox="0 0 10 10" preserveAspectRatio="none"><path d="M0,0 H10 L5,10 Z" fill="#333"/></svg>
<svg style="left:722.00px;top:336.90px" width="6.2" height="6.2" viewBox="0 0 10 10"><rect x="0" y="0" width="10" height="10" rx="1.2" fill="#263a47"/><circle cx="5" cy="5" r="2.7" fill="#fff"/><circle cx="5" cy="5" r="1" fill="#263a47"/></svg>
<svg style="left:935.20px;top:337.60px" width="5" height="5" viewBox="0 0 10 10"><path d="M4,1.5 H1.5 V8.5 H8.5 V6" fill="none" stroke="#2a4d85" stroke-width="1.5"/><path d="M5,5 L9,1 M5.5,1 H9 V4.5" fill="none" stroke="#2a4d85" stroke-width="1.5"/></svg>
<svg style="left:943.80px;top:338.20px" width="4" height="4" viewBox="0 0 10 10"><path d="M1,1 L9,9 M9,1 L1,9" fill="none" stroke="#263a47" stroke-width="1.6"/></svg>
<div style="left:710.20px;top:347.80px;width:235.80px;height:58.00px;background:#000;"></div>
<div style="left:710.20px;top:367.80px;width:235.80px;height:17.80px;background:#8a8a8a;"></div>
<div style="left:710.20px;top:376.20px;width:235.80px;height:0.80px;background:#adadad;"></div>
<div style="left:710.20px;top:367.80px;width:10.20px;height:8.00px;background:#1fde1f;"></div>
<div style="left:710.20px;top:371.30px;width:235.20px;height:0.80px;background:#101010;"></div>
<div style="left:710.20px;top:377.50px;width:10.20px;height:8.10px;background:#1fde1f;"></div>
<div style="left:710.20px;top:381.00px;width:235.20px;height:0.80px;background:#101010;"></div>
<div style="left:630.60px;top:376.40px;width:78.60px;height:0.60px;background:#c2cdd2;"></div>
<span id="t104" style="top:353px;height:19px;line-height:19px;font-size:14.4px;color:#222;white-space:nowrap;letter-spacing:-0.402px;left:632.00px;">Ch1</span>
<svg style="left:704.10px;top:359.80px" width="4.4" height="4.8" viewBox="0 0 10 10" preserveAspectRatio="none"><path d="M0,0 H10 L5,10 Z" fill="#111"/></svg>
<span id="t105" style="top:348px;height:19px;line-height:19px;font-size:14.2px;color:#52d552;white-space:nowrap;letter-spacing:0.177px;left:859.00px;">0.000176</span>
<span id="t106" style="top:348px;height:19px;line-height:19px;font-size:14.2px;color:#52d552;white-space:nowrap;letter-spacing:-0.125px;left:931.00px;">%</span>
<span id="t107" style="top:382px;height:19px;line-height:19px;font-size:14.4px;color:#222;white-space:nowrap;letter-spacing:-0.402px;left:632.00px;">Ch2</span>
<svg style="left:704.10px;top:389.60px" width="4.4" height="4.8" viewBox="0 0 10 10" preserveAspectRatio="none"><path d="M0,0 H10 L5,10 Z" fill="#111"/></svg>
<span id="t108" style="top:386px;height:19px;line-height:19px;font-size:14.2px;color:#52d552;white-space:nowrap;letter-spacing:0.102px;left:859.00px;">0.000173</span>
<span id="t109" style="top:386px;height:19px;line-height:19px;font-size:14.2px;color:#52d552;white-space:nowrap;letter-spacing:-0.125px;left:931.00px;">%</span>
<div style="left:304.70px;top:410.20px;width:322.00px;height:73.20px;background:#dce8ec;"></div>
<span id="t110" style="top:413px;height:9px;line-height:9px;font-size:6.8px;color:#000;white-space:nowrap;font-weight:bold;letter-spacing:0.484px;left:307.10px;">IMD Ratio</span>
<div style="left:346.00px;top:411.20px;width:27.80px;height:10.40px;background:#fff;"></div>
<span id="t111" style="top:413px;height:7px;line-height:7px;font-size:5.2px;color:#333;white-space:nowrap;letter-spacing:-0.208px;left:348.00px;">dB</span>
<svg style="left:369.70px;top:416.35px" width="1.8" height="1.5" viewBox="0 0 10 10" preserveAspectRatio="none"><path d="M0,0 H10 L5,10 Z" fill="#333"/></svg>
<div style="left:375.00px;top:413.60px;width:6.60px;height:5.80px;background:#e9eff1;border:0.7px solid #263a47;box-sizing:border-box;"></div>
<div style="left:376.40px;top:415.70px;width:3.80px;height:0.80px;background:#263a47;"></div>
<div style="left:375.70px;top:414.20px;width:5.20px;height:0.90px;background:#263a47;"></div>
<svg style="left:382.70px;top:416.35px" width="1.8" height="1.5" viewBox="0 0 10 10" preserveAspectRatio="none"><path d="M0,0 H10 L5,10 Z" fill="#333"/></svg>
<svg style="left:386.20px;top:413.50px" width="6.2" height="6.2" viewBox="0 0 10 10"><rect x="0" y="0" width="10" height="10" rx="1.2" fill="#263a47"/><circle cx="5" cy="5" r="2.7" fill="#fff"/><circle cx="5" cy="5" r="1" fill="#263a47"/></svg>
<svg style="left:611.90px;top:414.20px" width="5" height="5" viewBox="0 0 10 10"><path d="M4,1.5 H1.5 V8.5 H8.5 V6" fill="none" stroke="#2a4d85" stroke-width="1.5"/><path d="M5,5 L9,1 M5.5,1 H9 V4.5" fill="none" stroke="#2a4d85" stroke-width="1.5"/></svg>
<svg style="left:620.50px;top:414.80px" width="4" height="4" viewBox="0 0 10 10"><path d="M1,1 L9,9 M9,1 L1,9" fill="none" stroke="#263a47" stroke-width="1.6"/></svg>
<div style="left:386.70px;top:424.40px;width:236.00px;height:58.00px;background:#000;"></div>
<div style="left:386.70px;top:444.40px;width:236.00px;height:17.80px;background:#8a8a8a;"></div>
<div style="left:386.70px;top:452.80px;width:236.00px;height:0.80px;background:#adadad;"></div>
<div style="left:386.70px;top:444.40px;width:47.60px;height:8.00px;background:#1fde1f;"></div>
<div style="left:386.70px;top:447.90px;width:235.40px;height:0.80px;background:#101010;"></div>
<div style="left:386.70px;top:454.10px;width:47.60px;height:8.10px;background:#1fde1f;"></div>
<div style="left:386.70px;top:457.60px;width:235.40px;height:0.80px;background:#101010;"></div>
<div style="left:306.70px;top:453.00px;width:79.00px;height:0.60px;background:#c2cdd2;"></div>
<span id="t112" style="top:429px;height:19px;line-height:19px;font-size:14.4px;color:#222;white-space:nowrap;letter-spacing:-0.402px;left:308.10px;">Ch1</span>
<svg style="left:380.60px;top:436.40px" width="4.4" height="4.8" viewBox="0 0 10 10" preserveAspectRatio="none"><path d="M0,0 H10 L5,10 Z" fill="#111"/></svg>
<span id="t113" style="top:425px;height:19px;line-height:19px;font-size:14.2px;color:#52d552;white-space:nowrap;letter-spacing:0.268px;left:540.00px;">-95.999</span>
<span id="t114" style="top:425px;height:19px;line-height:19px;font-size:14.2px;color:#52d552;white-space:nowrap;letter-spacing:-0.030px;left:602.50px;">dB</span>
<span id="t115" style="top:459px;height:19px;line-height:19px;font-size:14.4px;color:#222;white-space:nowrap;letter-spacing:-0.402px;left:308.10px;">Ch2</span>
<svg style="left:380.60px;top:466.20px" width="4.4" height="4.8" viewBox="0 0 10 10" preserveAspectRatio="none"><path d="M0,0 H10 L5,10 Z" fill="#111"/></svg>
<span id="t116" style="top:462px;height:19px;line-height:19px;font-size:14.2px;color:#52d552;white-space:nowrap;letter-spacing:0.268px;left:540.00px;">-96.646</span>
<span id="t117" style="top:462px;height:19px;line-height:19px;font-size:14.2px;color:#52d552;white-space:nowrap;letter-spacing:-0.030px;left:602.50px;">dB</span>
<div style="left:628.60px;top:410.20px;width:321.40px;height:73.20px;background:#dce8ec;"></div>
<span id="t118" style="top:413px;height:9px;line-height:9px;font-size:6.8px;color:#000;white-space:nowrap;font-weight:bold;letter-spacing:0.209px;left:631.00px;">SINAD</span>
<div style="left:656.20px;top:411.20px;width:26.80px;height:10.40px;background:#fff;"></div>
<span id="t119" style="top:413px;height:7px;line-height:7px;font-size:5.2px;color:#333;white-space:nowrap;letter-spacing:-0.208px;left:658.20px;">dB</span>
<svg style="left:678.90px;top:416.35px" width="1.8" height="1.5" viewBox="0 0 10 10" preserveAspectRatio="none"><path d="M0,0 H10 L5,10 Z" fill="#333"/></svg>
<div style="left:685.00px;top:413.60px;width:6.60px;height:5.80px;background:#e9eff1;border:0.7px solid #263a47;box-sizing:border-box;"></div>
<div style="left:686.40px;top:415.70px;width:3.80px;height:0.80px;background:#263a47;"></div>
<div style="left:685.70px;top:414.20px;width:5.20px;height:0.90px;background:#263a47;"></div>
<svg style="left:692.70px;top:416.35px" width="1.8" height="1.5" viewBox="0 0 10 10" preserveAspectRatio="none"><path d="M0,0 H10 L5,10 Z" fill="#333"/></svg>
<svg style="left:696.60px;top:413.50px" width="6.2" height="6.2" viewBox="0 0 10 10"><rect x="0" y="0" width="10" height="10" rx="1.2" fill="#263a47"/><circle cx="5" cy="5" r="2.7" fill="#fff"/><circle cx="5" cy="5" r="1" fill="#263a47"/></svg>
<svg style="left:935.20px;top:414.20px" width="5" height="5" viewBox="0 0 10 10"><path d="M4,1.5 H1.5 V8.5 H8.5 V6" fill="none" stroke="#2a4d85" stroke-width="1.5"/><path d="M5,5 L9,1 M5.5,1 H9 V4.5" fill="none" stroke="#2a4d85" stroke-width="1.5"/></svg>
<svg style="left:943.80px;top:414.80px" width="4" height="4" viewBox="0 0 10 10"><path d="M1,1 L9,9 M9,1 L1,9" fill="none" stroke="#263a47" stroke-width="1.6"/></svg>
<div style="left:710.20px;top:424.40px;width:235.80px;height:58.00px;background:#000;"></div>
<div style="left:710.20px;top:444.40px;width:235.80px;height:17.80px;background:#8a8a8a;"></div>
<div style="left:710.20px;top:452.80px;width:235.80px;height:0.80px;background:#adadad;"></div>
<div style="left:710.20px;top:444.40px;width:226.50px;height:8.00px;background:#1fde1f;"></div>
<div style="left:710.20px;top:447.90px;width:225.90px;height:0.80px;background:#101010;"></div>
<div style="left:710.20px;top:454.10px;width:226.50px;height:8.10px;background:#1fde1f;"></div>
<div style="left:710.20px;top:457.60px;width:225.90px;height:0.80px;background:#101010;"></div>
<div style="left:630.60px;top:453.00px;width:78.60px;height:0.60px;background:#c2cdd2;"></div>
<span id="t120" style="top:429px;height:19px;line-height:19px;font-size:14.4px;color:#222;white-space:nowrap;letter-spacing:-0.402px;left:632.00px;">Ch1</span>
<svg style="left:704.10px;top:436.40px" width="4.4" height="4.8" viewBox="0 0 10 10" preserveAspectRatio="none"><path d="M0,0 H10 L5,10 Z" fill="#111"/></svg>
<span id="t121" style="top:425px;height:19px;line-height:19px;font-size:14.2px;color:#52d552;white-space:nowrap;letter-spacing:0.373px;left:861.00px;">115.112</span>
<span id="t122" style="top:425px;height:19px;line-height:19px;font-size:14.2px;color:#52d552;white-space:nowrap;letter-spacing:0.120px;left:925.60px;">dB</span>
<span id="t123" style="top:459px;height:19px;line-height:19px;font-size:14.4px;color:#222;white-space:nowrap;letter-spacing:-0.402px;left:632.00px;">Ch2</span>
<svg style="left:704.10px;top:466.20px" width="4.4" height="4.8" viewBox="0 0 10 10" preserveAspectRatio="none"><path d="M0,0 H10 L5,10 Z" fill="#111"/></svg>
<span id="t124" style="top:462px;height:19px;line-height:19px;font-size:14.2px;color:#52d552;white-space:nowrap;letter-spacing:0.224px;left:861.00px;">115.254</span>
<span id="t125" style="top:462px;height:19px;line-height:19px;font-size:14.2px;color:#52d552;white-space:nowrap;letter-spacing:0.120px;left:925.60px;">dB</span>
<div style="left:304.70px;top:486.80px;width:322.00px;height:30.00px;background:#dce8ec;"></div>
<span id="t126" style="top:489px;height:9px;line-height:9px;font-size:6.8px;color:#000;white-space:nowrap;font-weight:bold;letter-spacing:0.147px;left:307.10px;">Frequency</span>
<div style="left:346.00px;top:487.80px;width:27.80px;height:10.40px;background:#fff;"></div>
<span id="t127" style="top:490px;height:7px;line-height:7px;font-size:5.2px;color:#333;white-space:nowrap;letter-spacing:-0.208px;left:348.00px;">Hz</span>
<svg style="left:369.70px;top:492.95px" width="1.8" height="1.5" viewBox="0 0 10 10" preserveAspectRatio="none"><path d="M0,0 H10 L5,10 Z" fill="#333"/></svg>
<div style="left:375.00px;top:490.20px;width:6.60px;height:5.80px;background:#e9eff1;border:0.7px solid #263a47;box-sizing:border-box;"></div>
<div style="left:376.40px;top:492.30px;width:3.80px;height:0.80px;background:#263a47;"></div>
<div style="left:375.70px;top:490.80px;width:5.20px;height:0.90px;background:#263a47;"></div>
<svg style="left:382.70px;top:492.95px" width="1.8" height="1.5" viewBox="0 0 10 10" preserveAspectRatio="none"><path d="M0,0 H10 L5,10 Z" fill="#333"/></svg>
<svg style="left:386.20px;top:490.10px" width="6.2" height="6.2" viewBox="0 0 10 10"><rect x="0" y="0" width="10" height="10" rx="1.2" fill="#263a47"/><circle cx="5" cy="5" r="2.7" fill="#fff"/><circle cx="5" cy="5" r="1" fill="#263a47"/></svg>
<svg style="left:611.90px;top:490.80px" width="5" height="5" viewBox="0 0 10 10"><path d="M4,1.5 H1.5 V8.5 H8.5 V6" fill="none" stroke="#2a4d85" stroke-width="1.5"/><path d="M5,5 L9,1 M5.5,1 H9 V4.5" fill="none" stroke="#2a4d85" stroke-width="1.5"/></svg>
<svg style="left:620.50px;top:491.40px" width="4" height="4" viewBox="0 0 10 10"><path d="M1,1 L9,9 M9,1 L1,9" fill="none" stroke="#263a47" stroke-width="1.6"/></svg>
<div style="left:386.70px;top:501.00px;width:236.00px;height:20.00px;background:#000;"></div>
<span id="t128" style="top:508px;height:19px;line-height:19px;font-size:14.4px;color:#222;white-space:nowrap;letter-spacing:-0.402px;left:308.10px;">Ch1</span>
<svg style="left:380.60px;top:515.10px" width="4.4" height="4.8" viewBox="0 0 10 10" preserveAspectRatio="none"><path d="M0,0 H10 L5,10 Z" fill="#111"/></svg>
<span id="t129" style="top:503px;height:19px;line-height:19px;font-size:14.2px;color:#52d552;white-space:nowrap;letter-spacing:0.315px;left:526.50px;">1.00000</span>
<span id="t130" style="top:503px;height:19px;line-height:19px;font-size:14.2px;color:#52d552;white-space:nowrap;letter-spacing:0.388px;left:595.00px;">kHz</span>
<div style="left:628.60px;top:486.80px;width:321.40px;height:30.00px;background:#b9b9b9;border:0.7px solid #8d8d8d;box-sizing:border-box;"></div>
<div style="left:950.40px;top:332.80px;width:8.00px;height:184.00px;background:#e9e9e9;"></div>
<svg style="left:951.6px;top:334.6px" width="5.6" height="3.4" viewBox="0 0 10 6"><path d="M1,5 L5,1 L9,5" fill="none" stroke="#555" stroke-width="1.4"/></svg>
<svg style="left:951.6px;top:510.6px" width="5.6" height="3.4" viewBox="0 0 10 6"><path d="M1,1 L5,5 L9,1" fill="none" stroke="#555" stroke-width="1.4"/></svg>
<div style="left:951.40px;top:342.00px;width:6.00px;height:132.00px;background:#cbcbcb;"></div>
<div style="left:959.00px;top:46.50px;width:1.00px;height:286.00px;background:#4b7f8f;"></div>
<div style="left:0.00px;top:516.30px;width:960.00px;height:9.40px;background:#f1f1f1;"></div>
<span id="t131" style="top:517px;height:8px;line-height:8px;font-size:5.8px;color:#222;white-space:nowrap;letter-spacing:0.298px;left:598.20px;">Output:</span>
<div style="left:621.60px;top:517.70px;width:75.20px;height:7.00px;background:#0a0f0a;"></div>
<span id="t132" style="top:518px;height:7px;line-height:7px;font-size:5.2px;color:#4fd24f;white-space:nowrap;letter-spacing:0.221px;left:623.20px;">ASIO: USB DAC ASIO 2 Chs</span>
<div style="left:698.20px;top:517.70px;width:36.80px;height:7.00px;background:#0a0f0a;"></div>
<span id="t133" style="top:518px;height:7px;line-height:7px;font-size:5.2px;color:#4fd24f;white-space:nowrap;letter-spacing:0.424px;left:699.80px;">44.1000 kHz</span>
<span id="t134" style="top:517px;height:8px;line-height:8px;font-size:5.8px;color:#222;white-space:nowrap;letter-spacing:0.331px;left:738.00px;">Input:</span>
<div style="left:757.00px;top:517.70px;width:99.00px;height:7.00px;background:#0a0f0a;"></div>
<span id="t135" style="top:518px;height:7px;line-height:7px;font-size:5.2px;color:#4fd24f;white-space:nowrap;letter-spacing:0.395px;left:758.60px;">Analog Unbalanced 2 Ch, 100 kohm</span>
<div style="left:858.30px;top:517.70px;width:32.50px;height:7.00px;background:#0a0f0a;"></div>
<span id="t136" style="top:518px;height:7px;line-height:7px;font-size:5.2px;color:#4fd24f;white-space:nowrap;letter-spacing:0.316px;left:859.90px;">2.500 Vrms</span>
<div style="left:892.70px;top:517.70px;width:59.30px;height:7.00px;background:#0a0f0a;"></div>
<span id="t137" style="top:518px;height:7px;line-height:7px;font-size:5.2px;color:#4fd24f;white-space:nowrap;letter-spacing:0.342px;left:894.30px;">AC (&lt;10 Hz) - 20 kHz</span>
<div style="left:15.60px;top:348.40px;width:277.00px;height:180.00px;background:rgba(40,60,70,0.10);border-radius:1px;"></div>
<div style="left:16.40px;top:349.00px;width:275.30px;height:178.00px;background:rgba(40,60,70,0.16);"></div>
<div style="left:17.00px;top:349.60px;width:273.80px;height:176.20px;background:#f0f0f0;"></div>
<div style="left:17.00px;top:349.60px;width:273.80px;height:14.00px;background:#ffffff;"></div>
<span id="t138" style="top:352px;height:9px;line-height:9px;font-size:6.2px;color:#1a1a1a;white-space:nowrap;letter-spacing:-0.226px;left:21.20px;">USB DAC ASIO Settings</span>
<svg style="left:280.00px;top:353.90px" width="5.2" height="5.2" viewBox="0 0 10 10"><path d="M1,1 L9,9 M9,1 L1,9" fill="none" stroke="#333" stroke-width="1.1"/></svg>
<span id="t139" style="top:366px;height:8px;line-height:8px;font-size:6px;color:#1f1f1f;white-space:nowrap;letter-spacing:-0.313px;left:20.00px;">Sample Rate:</span>
<div style="left:57.20px;top:365.00px;width:48.40px;height:10.60px;background:#fff;border:0.6px solid #7da2ce;box-sizing:border-box;"></div>
<div style="left:58.20px;top:366.70px;width:30.00px;height:7.00px;background:#0a64c8;"></div>
<span id="t140" style="top:366px;height:8px;line-height:8px;font-size:5.6px;color:#fff;white-space:nowrap;letter-spacing:-0.220px;left:58.60px;">44.1000 kHz</span>
<div style="left:105.80px;top:365.20px;width:6.20px;height:10.20px;background:#4a8393;border-radius:1.5px;"></div>
<svg style="left:105.80px;top:365.20px" width="6.2" height="10.2" viewBox="0 0 6.2 10.2"><path d="M3.1,1.2 L4.9,4.1 L1.3,4.1 Z M3.1,9.0 L4.9,6.1 L1.3,6.1 Z" fill="#e8f2f5"/></svg>
<div style="left:120.20px;top:364.40px;width:40.00px;height:9.40px;background:#e1e1e1;box-shadow:inset 0 0 0 0.6px #b9b9b9;"></div>
<span id="t141" style="top:365px;height:8px;line-height:8px;font-size:6px;color:#1c2b33;white-space:nowrap;letter-spacing:-0.240px;left:-9.80px;width:300px;text-align:center;">Reset</span>
<span id="t142" style="top:379px;height:8px;line-height:8px;font-size:6px;color:#1f1f1f;white-space:nowrap;letter-spacing:-0.242px;left:20.00px;">Buffer Size:</span>
<div style="left:57.20px;top:378.40px;width:19.60px;height:10.20px;background:#fff;border:0.5px solid #b4b4b4;box-sizing:border-box;"></div>
<span id="t143" style="top:379px;height:8px;line-height:8px;font-size:6px;color:#1f1f1f;white-space:nowrap;letter-spacing:-0.339px;left:58.60px;">128</span>
<div style="left:76.60px;top:378.40px;width:6.00px;height:10.20px;background:#f0f0f0;border:0.5px solid #bbb;box-sizing:border-box;"></div>
<svg style="left:76.60px;top:378.40px" width="6" height="10.2" viewBox="0 0 6 10.2"><path d="M3.0,1.6 L4.4,4.1 L1.6,4.1 Z M3.0,8.6 L4.4,6.1 L1.6,6.1 Z" fill="#444"/></svg>
<span id="t144" style="top:379px;height:8px;line-height:8px;font-size:6px;color:#1f1f1f;white-space:nowrap;letter-spacing:-0.278px;left:87.00px;">samples</span>
<div style="left:120.20px;top:378.00px;width:40.00px;height:9.40px;background:#e1e1e1;box-shadow:inset 0 0 0 0.6px #b9b9b9;"></div>
<span id="t145" style="top:378px;height:8px;line-height:8px;font-size:6px;color:#1c2b33;white-space:nowrap;letter-spacing:-0.240px;left:-9.80px;width:300px;text-align:center;">Control</span>
<span id="t146" style="top:392px;height:8px;line-height:8px;font-size:6px;color:#1f1f1f;white-space:nowrap;letter-spacing:-0.366px;left:20.00px;">Clock Source:</span>
<div style="left:57.20px;top:391.20px;width:52.40px;height:10.00px;background:#e4e4e4;box-shadow:inset 0 0 0 0.6px #b4b4b4;"></div>
<span id="t147" style="top:392px;height:8px;line-height:8px;font-size:6px;color:#1c2b33;white-space:nowrap;letter-spacing:-0.255px;left:58.70px;">Computer</span>
<svg style="left:102.50px;top:394.80px" width="4.20" height="3.20" viewBox="-2.1 -1.6 4.2 3.2"><path d="M-1.6,-0.8 L0,0.8 L1.6,-0.8" fill="none" stroke="#444" stroke-width="0.7"/></svg>
<div style="left:120.20px;top:390.40px;width:40.00px;height:9.40px;background:#e1e1e1;box-shadow:inset 0 0 0 0.6px #b9b9b9;"></div>
<span id="t148" style="top:391px;height:8px;line-height:8px;font-size:6px;color:#1c2b33;white-space:nowrap;letter-spacing:-0.240px;left:-9.80px;width:300px;text-align:center;">Device Info...</span>
<svg style="left:57.40px;top:405.20px" width="6.2" height="6.2" viewBox="0 0 6.2 6.2"><rect x="0.35" y="0.35" width="5.50" height="5.50" fill="#fff" stroke="#333" stroke-width="0.7"/><path d="M1.43,3.22 L2.67,4.46 L4.90,1.80" fill="none" stroke="#222" stroke-width="0.75"/></svg>
<span id="t149" style="top:404px;height:8px;line-height:8px;font-size:6px;color:#1f1f1f;white-space:nowrap;letter-spacing:-0.212px;left:66.00px;">Enable Dither</span>
<svg style="left:57.40px;top:416.20px" width="6.2" height="6.2" viewBox="0 0 6.2 6.2"><rect x="0.35" y="0.35" width="5.50" height="5.50" fill="#fff" stroke="#333" stroke-width="0.7"/><path d="M1.43,3.22 L2.67,4.46 L4.90,1.80" fill="none" stroke="#222" stroke-width="0.75"/></svg>
<span id="t150" style="top:415px;height:8px;line-height:8px;font-size:6px;color:#1f1f1f;white-space:nowrap;letter-spacing:-0.277px;left:66.00px;">Auto Map Channels</span>
<div style="left:17.60px;top:438.60px;width:270.60px;height:87.20px;background:#ffffff;"></div>
<div style="left:19.00px;top:428.00px;width:45.40px;height:11.00px;background:#ffffff;box-shadow:0 0 0 0.5px #dedede;"></div>
<div style="left:64.90px;top:430.00px;width:40.20px;height:8.60px;background:#f2f2f2;box-shadow:0 0 0 0.5px #dedede;"></div>
<span id="t151" style="top:429px;height:8px;line-height:8px;font-size:6px;color:#1f1f1f;white-space:nowrap;letter-spacing:-0.269px;left:21.20px;">Output Channels</span>
<span id="t152" style="top:430px;height:8px;line-height:8px;font-size:6px;color:#1f1f1f;white-space:nowrap;letter-spacing:-0.270px;left:66.60px;">Input Channels</span>
<div style="left:21.40px;top:440.60px;width:110.00px;height:85.20px;background:#fff;box-shadow:-0.6px -0.6px 0 0 #8e9aa0;"></div>
<div style="left:22.00px;top:441.20px;width:108.80px;height:9.40px;background:#c9dde5;"></div>
<span id="t153" style="top:441px;height:8px;line-height:8px;font-size:6px;color:#1a2a33;white-space:nowrap;letter-spacing:-0.042px;left:23.20px;">ASIO Output Channels</span>
<div style="left:85.80px;top:442.60px;width:0.50px;height:6.40px;background:#a9bfc8;"></div>
<svg style="left:88.8px;top:443.2px" width="5.4" height="5.4" viewBox="0 0 10 10"><path d="M1.5,4.5 A3.6,3.6 0 0 1 8,3 M8.5,5.5 A3.6,3.6 0 0 1 2,7" fill="none" stroke="#2f7fd0" stroke-width="1.7"/><path d="M6,3.2 H9 V0.4 Z M4,6.8 H1 V9.6 Z" fill="#2f7fd0"/></svg>
<div style="left:22.00px;top:469.90px;width:108.80px;height:9.25px;background:#ffffe1;"></div>
<div style="left:22.00px;top:488.40px;width:108.80px;height:9.25px;background:#ffffe1;"></div>
<div style="left:22.00px;top:506.90px;width:108.80px;height:9.25px;background:#ffffe1;"></div>
<div style="left:44.20px;top:451.00px;width:0.50px;height:75.00px;background:#ececec;"></div>
<div style="left:110.30px;top:451.00px;width:0.50px;height:75.00px;background:#ececec;"></div>
<span id="t154" style="top:452px;height:8px;line-height:8px;font-size:5.8px;color:#333;white-space:nowrap;letter-spacing:-0.500px;left:24.20px;">Chan...</span>
<span id="t155" style="top:452px;height:8px;line-height:8px;font-size:5.8px;color:#333;white-space:nowrap;letter-spacing:-0.117px;left:46.40px;">Name</span>
<span id="t156" style="top:461px;height:8px;line-height:8px;font-size:5.8px;color:#a0a0a0;white-space:nowrap;letter-spacing:-0.232px;left:24.20px;">1</span>
<span id="t157" style="top:461px;height:8px;line-height:8px;font-size:5.8px;color:#a0a0a0;white-space:nowrap;letter-spacing:-0.094px;left:46.40px;">Analogue 1</span>
<span id="t158" style="top:470px;height:8px;line-height:8px;font-size:5.8px;color:#a0a090;white-space:nowrap;letter-spacing:-0.232px;left:24.20px;">2</span>
<span id="t159" style="top:470px;height:8px;line-height:8px;font-size:5.8px;color:#a0a090;white-space:nowrap;letter-spacing:-0.074px;left:46.40px;">Analogue 2</span>
<div style="left:134.00px;top:500.00px;width:38.20px;height:8.80px;background:#cfcfcf;"></div>
<span id="t160" style="top:500px;height:8px;line-height:8px;font-size:6px;color:#8a8a8a;white-space:nowrap;letter-spacing:0.149px;left:143.00px;">Add  &gt;&gt;</span>
<div style="left:174.40px;top:440.60px;width:110.60px;height:85.20px;background:#fff;box-shadow:-0.6px -0.6px 0 0 #8e9aa0;"></div>
<div style="left:175.00px;top:441.20px;width:109.40px;height:9.40px;background:#d3e2e8;"></div>
<span id="t161" style="top:441px;height:8px;line-height:8px;font-size:6px;color:#1a2a33;white-space:nowrap;letter-spacing:-0.005px;left:176.60px;">APx Output Channels</span>
<span id="t162" style="top:441px;height:8px;line-height:8px;font-size:5.6px;color:#6d8089;white-space:nowrap;font-weight:bold;letter-spacing:-0.224px;left:239.80px;">↑</span>
<span id="t163" style="top:441px;height:8px;line-height:8px;font-size:5.6px;color:#6d8089;white-space:nowrap;font-weight:bold;letter-spacing:-0.224px;left:248.60px;">↓</span>
<div style="left:255.80px;top:442.60px;width:0.50px;height:6.40px;background:#a9bfc8;"></div>
<div style="left:258.60px;top:442.80px;width:6.00px;height:6.00px;border:0.7px solid #6a7b84;box-sizing:border-box;"></div>
<svg style="left:260.00px;top:444.20px" width="3.2" height="3.2" viewBox="0 0 10 10"><path d="M1,1 L9,9 M9,1 L1,9" fill="none" stroke="#6a7b84" stroke-width="1.4"/></svg>
<div style="left:188.40px;top:450.70px;width:96.00px;height:10.50px;background:#ffffff;"></div>
<div style="left:175.00px;top:450.70px;width:13.40px;height:10.50px;background:#f3f3f3;border:0.4px solid #dddddd;box-sizing:border-box;"></div>
<span id="t164" style="top:452px;height:8px;line-height:8px;font-size:5.6px;color:#a8a8a8;white-space:nowrap;letter-spacing:-0.224px;left:179.60px;">1</span>
<div style="left:188.40px;top:461.20px;width:96.00px;height:10.50px;background:#ffffe6;"></div>
<div style="left:175.00px;top:461.20px;width:13.40px;height:10.50px;background:#f3f3f3;border:0.4px solid #dddddd;box-sizing:border-box;"></div>
<span id="t165" style="top:463px;height:8px;line-height:8px;font-size:5.6px;color:#a8a8a8;white-space:nowrap;letter-spacing:-0.224px;left:179.60px;">2</span>
<div style="left:188.40px;top:471.70px;width:96.00px;height:10.50px;background:#b5c9cf;"></div>
<div style="left:175.00px;top:471.70px;width:13.40px;height:10.50px;background:#f3f3f3;border:0.4px solid #dddddd;box-sizing:border-box;"></div>
<span id="t166" style="top:473px;height:8px;line-height:8px;font-size:5.6px;color:#a8a8a8;white-space:nowrap;letter-spacing:-0.224px;left:179.60px;">3</span>
<div style="left:188.40px;top:482.20px;width:96.00px;height:10.50px;background:#ffffe6;"></div>
<div style="left:175.00px;top:482.20px;width:13.40px;height:10.50px;background:#f3f3f3;border:0.4px solid #dddddd;box-sizing:border-box;"></div>
<span id="t167" style="top:484px;height:8px;line-height:8px;font-size:5.6px;color:#a8a8a8;white-space:nowrap;letter-spacing:-0.224px;left:179.60px;">4</span>
<div style="left:188.40px;top:492.70px;width:96.00px;height:10.50px;background:#ffffff;"></div>
<div style="left:175.00px;top:492.70px;width:13.40px;height:10.50px;background:#f3f3f3;border:0.4px solid #dddddd;box-sizing:border-box;"></div>
<span id="t168" style="top:494px;height:8px;line-height:8px;font-size:5.6px;color:#a8a8a8;white-space:nowrap;letter-spacing:-0.224px;left:179.60px;">5</span>
<div style="left:188.40px;top:503.20px;width:96.00px;height:10.50px;background:#ffffe6;"></div>
<div style="left:175.00px;top:503.20px;width:13.40px;height:10.50px;background:#f3f3f3;border:0.4px solid #dddddd;box-sizing:border-box;"></div>
<span id="t169" style="top:505px;height:8px;line-height:8px;font-size:5.6px;color:#a8a8a8;white-space:nowrap;letter-spacing:-0.224px;left:179.60px;">6</span>
<div style="left:188.40px;top:513.70px;width:96.00px;height:9.60px;background:#ffffff;"></div>
<div style="left:175.00px;top:513.70px;width:13.40px;height:9.60px;background:#f3f3f3;border:0.4px solid #dddddd;box-sizing:border-box;"></div>
<span id="t170" style="top:515px;height:8px;line-height:8px;font-size:5.6px;color:#a8a8a8;white-space:nowrap;letter-spacing:-0.224px;left:179.60px;">7</span>
<span id="t171" style="top:451px;height:8px;line-height:8px;font-size:6px;color:#222;white-space:nowrap;letter-spacing:-0.138px;left:189.20px;">Analogue 1</span>
<span id="t172" style="top:461px;height:8px;line-height:8px;font-size:6px;color:#222;white-space:nowrap;letter-spacing:-0.117px;left:189.20px;">Analogue 2</span>
<div style="left:0.00px;top:525.70px;width:960.00px;height:14.30px;background:linear-gradient(#1b1b1b,#242424);"></div>
<svg style="left:4.6px;top:529.4px" width="7" height="7" viewBox="0 0 14 14"><path d="M0,0 H6.4 V6.4 H0 Z M7.6,0 H14 V6.4 H7.6 Z M0,7.6 H6.4 V14 H0 Z M7.6,7.6 H14 V14 H7.6 Z" fill="#f4f4f4"/></svg>
<svg style="left:21.4px;top:529.2px" width="7.4" height="7.4" viewBox="0 0 10 10"><circle cx="5" cy="5" r="3.9" fill="none" stroke="#f0f0f0" stroke-width="1.5"/></svg>
<div style="left:38.60px;top:529.80px;width:9.00px;height:6.40px;background:#f2c84b;border-radius:0.6px;"></div>
<div style="left:39.60px;top:532.60px;width:7.00px;height:2.40px;background:#5aa7e0;"></div>
<div style="left:38.60px;top:529.20px;width:4.00px;height:1.40px;background:#e0a92a;"></div>
<div style="left:36.60px;top:539.20px;width:13.00px;height:0.80px;background:#8fbce6;"></div>
<svg style="left:56px;top:530px" width="7" height="6" viewBox="0 0 10 10"><path d="M5,1 L9,9 H1 Z" fill="#f1f1f1"/></svg>
<div style="left:74.40px;top:530.20px;width:7.40px;height:5.40px;background:#e9e9ee;border-radius:50% 50% 40% 40%;"></div>
<div style="left:75.40px;top:532.60px;width:5.60px;height:2.60px;background:#c23a3a;border-radius:40%;transform:rotate(-25deg);"></div>
<div style="left:91.60px;top:529.20px;width:7.80px;height:7.80px;background:radial-gradient(circle at 60% 35%,#4fd1c2 0%,#2a8fd6 55%,#1e5fae 100%);border-radius:50%;"></div>
<div style="left:109.00px;top:529.20px;width:7.80px;height:7.80px;background:conic-gradient(#e04a3c 0 33%,#f0c23a 33% 66%,#3aa655 66% 100%);border-radius:50%;"></div>
<div style="left:111.40px;top:531.60px;width:3.00px;height:3.00px;background:#4a8de8;border:0.6px solid #fff;box-sizing:border-box;border-radius:50%;"></div>
<div style="left:126.60px;top:529.40px;width:6.00px;height:7.40px;background:#15151a;border-radius:45%;"></div>
<div style="left:127.80px;top:531.40px;width:3.60px;height:4.60px;background:#f2f2f2;border-radius:50%;"></div>
<div style="left:126.80px;top:533.20px;width:5.60px;height:1.60px;background:#d8322d;border-radius:40%;"></div>
<div style="left:143.00px;top:529.20px;width:8.00px;height:8.00px;background:#8c8c8c;border-radius:50%;"></div>
<div style="left:160.40px;top:529.60px;width:8.00px;height:6.80px;background:#3f8fd0;border-radius:1.2px;"></div>
<div style="left:161.60px;top:530.80px;width:5.60px;height:2.40px;background:#9fd0f0;"></div>
<div style="left:178.00px;top:529.40px;width:7.40px;height:7.40px;background:#e8eef4;border-radius:0.6px;"></div>
<div style="left:178.80px;top:532.00px;width:5.80px;height:4.00px;background:#3d7fc4;"></div>
<div style="left:181.80px;top:530.20px;width:3.00px;height:2.40px;background:#d14d3a;"></div>
<svg style="left:196.4px;top:529.8px" width="5" height="7" viewBox="0 0 10 14"><path d="M5,0 V10 M2,7 L5,11 L8,7" fill="none" stroke="#45b04a" stroke-width="2.2"/></svg>
<div style="left:212.00px;top:529.20px;width:8.00px;height:8.00px;background:#8c8c8c;border-radius:50%;"></div>
<div style="left:225.00px;top:525.70px;width:16.40px;height:14.30px;background:#3d3f42;"></div>
<div style="left:225.00px;top:539.20px;width:16.40px;height:0.80px;background:#8fbce6;"></div>
<div style="left:229.40px;top:529.60px;width:7.40px;height:6.80px;background:#10141f;border:0.5px solid #5d6f86;box-sizing:border-box;border-radius:0.6px;"></div>
<span id="t173" style="top:531px;height:6px;line-height:6px;font-size:4px;color:#bcd8ff;white-space:nowrap;font-weight:bold;letter-spacing:-0.160px;left:230.60px;">Ap</span>
<svg style="left:247px;top:529.2px" width="8" height="8" viewBox="0 0 10 10"><path d="M1,1.5 Q5,4 9,1.5 Q9,6 5,9 Q1,6 1,1.5 Z" fill="#f3f3f3"/><circle cx="3.6" cy="4.3" r="0.9" fill="#222"/><circle cx="6.4" cy="4.3" r="0.9" fill="#222"/></svg>
<svg style="left:785.6px;top:528.6px" width="9.4" height="8.6" viewBox="0 0 10 10"><path d="M0.8,0.5 V9.3 H9.6" fill="none" stroke="#3fb94a" stroke-width="1.3"/><path d="M2.2,6.8 L4.4,4.6 L6,5.8 L9,2.6" fill="none" stroke="#3fb94a" stroke-width="1.3"/><path d="M3,9 V7.6 M5,9 V7 M7,9 V6.2" stroke="#3fb94a" stroke-width="1.1"/></svg>
<span id="t174" style="top:528px;height:9px;line-height:9px;font-size:6.6px;color:#f2f2f2;white-space:nowrap;letter-spacing:0.356px;left:800.20px;">恒生指数</span>
<span id="t175" style="top:528px;height:9px;line-height:9px;font-size:6.2px;color:#45c552;white-space:nowrap;letter-spacing:0.310px;left:832.00px;">-1.9...</span>
<svg style="left:855px;top:531.4px" width="5.4" height="3.4" viewBox="0 0 10 6"><path d="M1,5 L5,1 L9,5" fill="none" stroke="#e8e8e8" stroke-width="1.3"/></svg>
<svg style="left:864.8px;top:530.2px" width="7.6" height="6" viewBox="0 0 12 10"><path d="M0.5,3.5 H2.5 L5.5,1 V9 L2.5,6.5 H0.5 Z" fill="#e8e8e8"/><path d="M7.2,3 Q8.6,5 7.2,7 M9,1.6 Q11.4,5 9,8.4" fill="none" stroke="#e8e8e8" stroke-width="0.9"/></svg>
<span id="t176" style="top:528px;height:11px;line-height:11px;font-size:8.4px;color:#e8392d;white-space:nowrap;font-weight:bold;letter-spacing:-0.336px;left:876.60px;">T</span>
<span id="t177" style="top:529px;height:9px;line-height:9px;font-size:6.8px;color:#f0f0f0;white-space:nowrap;letter-spacing:-0.272px;left:887.40px;">中</span>
<div style="left:900.60px;top:529.80px;width:7.00px;height:6.60px;background:#f2602e;border-radius:1.4px;"></div>
<span id="t178" style="top:529px;height:8px;line-height:8px;font-size:5.4px;color:#fff;white-space:nowrap;font-weight:bold;letter-spacing:-0.216px;left:901.80px;">S</span>
<span id="t179" style="top:529px;height:8px;line-height:8px;font-size:5.8px;color:#f2f2f2;white-space:nowrap;letter-spacing:0.177px;left:917.20px;">14:48</span>
<div style="left:941.60px;top:529.60px;width:7.60px;height:6.00px;background:#f4f4f4;border-radius:0.6px;"></div>
<div style="left:943.00px;top:531.20px;width:4.80px;height:0.70px;background:#333;"></div>
<div style="left:943.00px;top:532.80px;width:4.80px;height:0.70px;background:#333;"></div>
<svg style="left:943px;top:535.4px" width="3" height="2" viewBox="0 0 10 6"><path d="M0,0 H10 L2,6 Z" fill="#f4f4f4"/></svg>
</div></body></html>
